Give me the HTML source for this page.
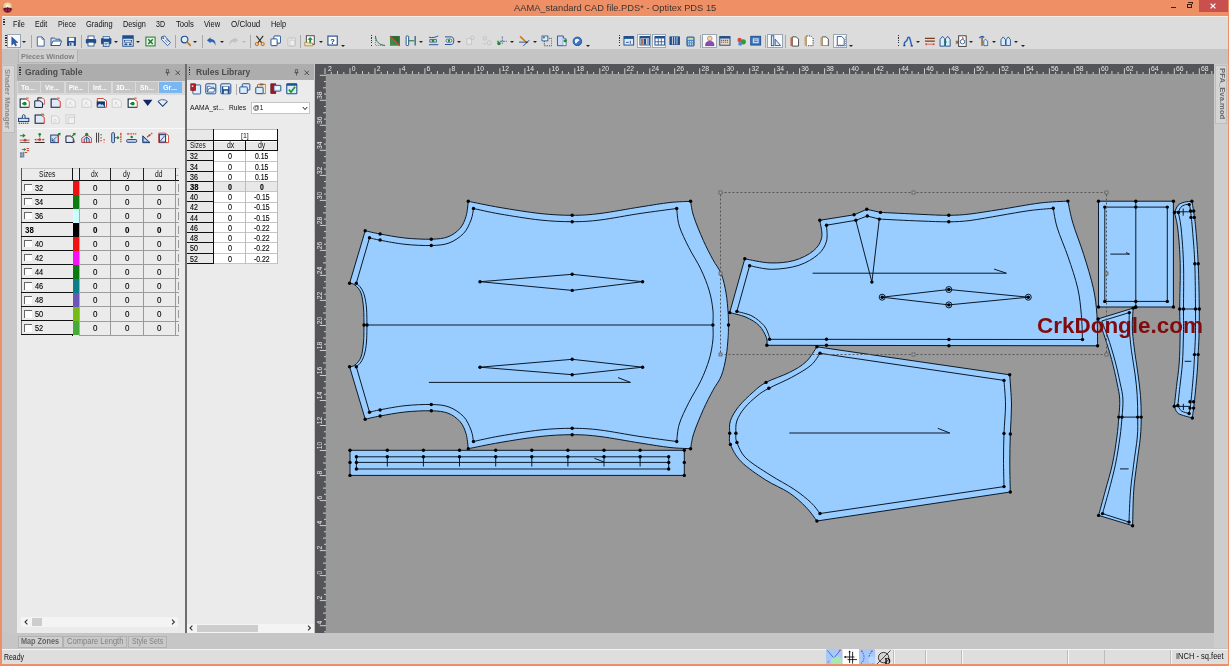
<!DOCTYPE html><html><head><meta charset="utf-8"><title>Optitex PDS 15</title>
<style>html,body{margin:0;padding:0}body{width:1229px;height:666px;overflow:hidden;position:relative;background:#ee8f66;font-family:"Liberation Sans", sans-serif;}#root{position:absolute;left:0;top:0;width:1229px;height:666px;overflow:hidden;will-change:transform}div{box-sizing:border-box}</style></head><body><div id="root">
<div style="position:absolute;left:0px;top:0px;width:1229px;height:16px;background:#ee8f66;"></div>
<div style="position:absolute;left:513.80px;top:1.00px;font-size:9.6px;line-height:13px;color:#3c3430;white-space:nowrap;transform:scaleX(0.970);transform-origin:0 50%;">AAMA_standard CAD file.PDS* - Optitex PDS 15</div>
<svg style="position:absolute;left:2px;top:1.8px" width="11.2" height="11.2" viewBox="0 0 11.2 11.2"><defs><radialGradient id="ag" cx="50%" cy="35%" r="60%"><stop offset="0" stop-color="#fff8e8"/><stop offset="0.55" stop-color="#e8c890"/><stop offset="1" stop-color="#b87828"/></radialGradient></defs><circle cx="5.6" cy="5.6" r="5.4" fill="url(#ag)"/><path d="M1.2,6.6 C2.6,5.2 4.2,6.6 5.6,5 C7,6.6 8.6,5.2 10,6.6 C9.6,9.4 7.6,10.6 5.6,10.6 C3.6,10.6 1.6,9.4 1.2,6.6 Z" fill="#6a1030"/><circle cx="4.2" cy="8.2" r="0.9" fill="#b03060"/><circle cx="7" cy="8.2" r="0.9" fill="#b03060"/></svg>
<div style="position:absolute;left:1199px;top:0px;width:28.5px;height:11.7px;background:#c8504e;"></div>
<div style="position:absolute;left:1170.6px;top:6.8px;width:5.4px;height:1.4px;background:#3a2218;"></div>
<div style="position:absolute;left:1186.5px;top:3.6px;width:5px;height:4.6px;border:1px solid #3a2218"></div><div style="position:absolute;left:1188px;top:2.4px;width:5px;height:2px;border-top:1px solid #3a2218;border-right:1px solid #3a2218"></div>
<svg style="position:absolute;left:1210px;top:3px" width="6" height="6" viewBox="0 0 6 6"><path d="M0.6,0.6 L5.4,5.4 M5.4,0.6 L0.6,5.4" stroke="#fff" stroke-width="1.3"/></svg>
<div style="position:absolute;left:1.6px;top:16px;width:1226.2px;height:648px;background:#c6c6c6;"></div>
<div style="position:absolute;left:1.6px;top:16px;width:1226.2px;height:33.5px;background:#dcdcdc;"></div>
<div style="position:absolute;left:1.6px;top:16px;width:1226.2px;height:0.8px;background:#f8ece6;"></div>
<div style="position:absolute;left:1.6px;top:49.4px;width:1226.2px;height:15px;background:#c4c4c4;"></div>
<div style="position:absolute;left:3.2px;top:18.5px;width:1.4px;height:7px;background:repeating-linear-gradient(#333 0 1.2px,transparent 1.2px 2.4px)"></div>
<div style="position:absolute;left:12.60px;top:19.00px;font-size:8.2px;line-height:11px;color:#111;white-space:nowrap;transform:scaleX(0.893);transform-origin:0 50%;">File</div>
<div style="position:absolute;left:34.90px;top:19.00px;font-size:8.2px;line-height:11px;color:#111;white-space:nowrap;transform:scaleX(0.870);transform-origin:0 50%;">Edit</div>
<div style="position:absolute;left:57.70px;top:19.00px;font-size:8.2px;line-height:11px;color:#111;white-space:nowrap;transform:scaleX(0.878);transform-origin:0 50%;">Piece</div>
<div style="position:absolute;left:85.70px;top:19.00px;font-size:8.2px;line-height:11px;color:#111;white-space:nowrap;transform:scaleX(0.912);transform-origin:0 50%;">Grading</div>
<div style="position:absolute;left:122.80px;top:19.00px;font-size:8.2px;line-height:11px;color:#111;white-space:nowrap;transform:scaleX(0.893);transform-origin:0 50%;">Design</div>
<div style="position:absolute;left:156.30px;top:19.00px;font-size:8.2px;line-height:11px;color:#111;white-space:nowrap;transform:scaleX(0.859);transform-origin:0 50%;">3D</div>
<div style="position:absolute;left:176.00px;top:19.00px;font-size:8.2px;line-height:11px;color:#111;white-space:nowrap;transform:scaleX(0.935);transform-origin:0 50%;">Tools</div>
<div style="position:absolute;left:204.30px;top:19.00px;font-size:8.2px;line-height:11px;color:#111;white-space:nowrap;transform:scaleX(0.913);transform-origin:0 50%;">View</div>
<div style="position:absolute;left:230.60px;top:19.00px;font-size:8.2px;line-height:11px;color:#111;white-space:nowrap;transform:scaleX(0.974);transform-origin:0 50%;">O/Cloud</div>
<div style="position:absolute;left:270.60px;top:19.00px;font-size:8.2px;line-height:11px;color:#111;white-space:nowrap;transform:scaleX(0.895);transform-origin:0 50%;">Help</div>
<div style="position:absolute;left:5.2px;top:35px;width:1.4px;height:12px;background:repeating-linear-gradient(#333 0 1.2px,transparent 1.2px 2.4px)"></div><div style="position:absolute;left:6.5px;top:33.5px;width:14px;height:14px;background:#f8f8f8;border:0.6px solid #9aa6b4;"></div><svg style="position:absolute;left:8.5px;top:35.5px" width="11" height="11" viewBox="0 0 12 12"><path d="M3,1 L3,10 L5.3,7.8 L7,11 L8.3,10.4 L6.8,7.3 L9.8,7.2 Z" fill="#2a5db0" stroke="#16386e" stroke-width="0.5"/></svg><div style="position:absolute;left:22.2px;top:40.5px;width:0;height:0;border-left:2.2px solid transparent;border-right:2.2px solid transparent;border-top:2.6px solid #222"></div><div style="position:absolute;left:30.6px;top:34.5px;width:1px;height:13px;background:#a8a8a8;"></div><svg style="position:absolute;left:35px;top:35.5px" width="11" height="11" viewBox="0 0 12 12"><path d="M2.5,1 H7.5 L10,3.5 V11 H2.5 Z" fill="#fff" stroke="#1f4e8c" stroke-width="0.9"/><path d="M7.5,1 V3.5 H10" fill="none" stroke="#1f4e8c" stroke-width="0.7"/></svg><svg style="position:absolute;left:49.5px;top:35px" width="12" height="12" viewBox="0 0 12 12"><path d="M1,3 H4.5 L5.5,4.2 H10 V10.5 H1 Z" fill="#cfe3f7" stroke="#1f4e8c" stroke-width="0.9"/><path d="M1,10.5 L3,6 H11.6 L10,10.5 Z" fill="#fff" stroke="#1f4e8c" stroke-width="0.9"/></svg><svg style="position:absolute;left:65.5px;top:35.5px" width="11" height="11" viewBox="0 0 12 12"><rect x="1.2" y="1.2" width="9.6" height="9.6" rx="0.8" fill="#1f4e8c"/><rect x="3" y="1.8" width="6" height="3.6" fill="#fff"/><rect x="3.6" y="7.2" width="4.8" height="3.6" fill="#dbe8f8"/><rect x="4.4" y="7.8" width="1.5" height="2.6" fill="#1f4e8c"/></svg><div style="position:absolute;left:81px;top:34.5px;width:1px;height:13px;background:#a8a8a8;"></div><svg style="position:absolute;left:84.5px;top:35px" width="12" height="12" viewBox="0 0 12 12"><rect x="3" y="1" width="6" height="3.4" fill="#fff" stroke="#1f4e8c" stroke-width="0.8"/><rect x="0.8" y="4" width="10.4" height="4.6" rx="1" fill="#1f4e8c"/><rect x="3" y="7.2" width="6" height="3.8" fill="#fff" stroke="#1f4e8c" stroke-width="0.8"/></svg><svg style="position:absolute;left:100px;top:34.8px" width="12.4" height="12.4" viewBox="0 0 12 12"><rect x="1" y="3" width="10" height="6" rx="1" fill="#1f4e8c"/><rect x="3" y="1.5" width="6" height="2.4" fill="#cfe3f7" stroke="#1f4e8c" stroke-width="0.6"/><rect x="3.2" y="6.6" width="5.6" height="4.4" fill="#fff" stroke="#1f4e8c" stroke-width="0.8"/><path d="M4.2,8.3 H7.8 M4.2,9.6 H7" stroke="#1f4e8c" stroke-width="0.6"/></svg><div style="position:absolute;left:113.8px;top:40.5px;width:0;height:0;border-left:2.2px solid transparent;border-right:2.2px solid transparent;border-top:2.6px solid #222"></div><svg style="position:absolute;left:122px;top:35px" width="12" height="12" viewBox="0 0 12 12"><rect x="0.8" y="0.8" width="10.4" height="10.4" fill="#fff" stroke="#1f4e8c" stroke-width="1"/><rect x="0.8" y="0.8" width="10.4" height="3" fill="#1f4e8c"/><rect x="2.4" y="5.2" width="7.2" height="2" fill="none" stroke="#1f4e8c" stroke-width="0.8"/><rect x="2.4" y="8.4" width="3" height="1.8" fill="#1f4e8c"/><rect x="6.8" y="8.4" width="2.8" height="1.8" fill="#1f4e8c"/></svg><div style="position:absolute;left:136.1px;top:40.5px;width:0;height:0;border-left:2.2px solid transparent;border-right:2.2px solid transparent;border-top:2.6px solid #222"></div><svg style="position:absolute;left:145px;top:35.5px" width="11" height="11" viewBox="0 0 12 12"><rect x="1" y="1.2" width="10" height="9.6" fill="#e8f4e8" stroke="#1e7a2e" stroke-width="1.1"/><path d="M3.5,3.5 L8.5,8.7 M8.5,3.5 L3.5,8.7" stroke="#1e7a2e" stroke-width="1.6"/></svg><svg style="position:absolute;left:160px;top:35.3px" width="11.4" height="11.4" viewBox="0 0 12 12"><path d="M1.5,2 L5,1 L11,8 L8,11.2 L1.5,4.8 Z" fill="#eaf2fb" stroke="#1f4e8c" stroke-width="0.9"/><circle cx="3.4" cy="3.2" r="0.9" fill="#1f4e8c"/><path d="M5,5 L8,8.2 M6.6,4 L9.4,7" stroke="#1f4e8c" stroke-width="0.7"/></svg><div style="position:absolute;left:175.4px;top:34.5px;width:1px;height:13px;background:#a8a8a8;"></div><svg style="position:absolute;left:179.6px;top:35.3px" width="11.4" height="11.4" viewBox="0 0 12 12"><circle cx="4.8" cy="4.8" r="3.5" fill="#dcecfb" stroke="#1f4e8c" stroke-width="1.2"/><path d="M7.4,7.4 L11,11" stroke="#c07a2a" stroke-width="1.8" stroke-linecap="round"/></svg><div style="position:absolute;left:193.3px;top:40.5px;width:0;height:0;border-left:2.2px solid transparent;border-right:2.2px solid transparent;border-top:2.6px solid #222"></div><div style="position:absolute;left:202.2px;top:34.5px;width:1px;height:13px;background:#a8a8a8;"></div><svg style="position:absolute;left:206px;top:35.5px" width="11" height="11" viewBox="0 0 12 12"><path d="M1,4.6 L5,1.4 V3.4 C9,3.4 10.8,6 10.4,10.6 C9.6,7.6 8.2,6.2 5,6.2 V8 Z" fill="#2a62b8"/></svg><div style="position:absolute;left:219.5px;top:40.5px;width:0;height:0;border-left:2.2px solid transparent;border-right:2.2px solid transparent;border-top:2.6px solid #222"></div><svg style="position:absolute;left:228px;top:35.5px" width="11" height="11" viewBox="0 0 12 12"><path d="M11,4.6 L7,1.4 V3.4 C3,3.4 1.2,6 1.6,10.6 C2.4,7.6 3.8,6.2 7,6.2 V8 Z" fill="#c2c2c2"/></svg><div style="position:absolute;left:242px;top:40.5px;width:0;height:0;border-left:2.2px solid transparent;border-right:2.2px solid transparent;border-top:2.6px solid #b8b8b8"></div><div style="position:absolute;left:250.2px;top:34.5px;width:1px;height:13px;background:#a8a8a8;"></div><svg style="position:absolute;left:254.3px;top:35.2px" width="11.6" height="11.6" viewBox="0 0 12 12"><path d="M2.5,1 L8.2,8.4 M9.5,1 L3.8,8.4" stroke="#333" stroke-width="1.2"/><circle cx="3" cy="9.4" r="1.6" fill="none" stroke="#d07818" stroke-width="1.2"/><circle cx="9" cy="9.4" r="1.6" fill="none" stroke="#d07818" stroke-width="1.2"/></svg><svg style="position:absolute;left:269.7px;top:35.2px" width="11.6" height="11.6" viewBox="0 0 12 12"><rect x="4" y="1" width="7" height="7.4" rx="0.6" fill="#fff" stroke="#1f4e8c" stroke-width="1"/><rect x="1" y="4" width="6.4" height="7" rx="0.6" fill="#fff" stroke="#1f4e8c" stroke-width="1"/></svg><svg style="position:absolute;left:285.5px;top:35.5px" width="11" height="11" viewBox="0 0 12 12"><rect x="2" y="2" width="8.4" height="9" rx="0.6" fill="#e4e4e4" stroke="#c0c0c0" stroke-width="0.9"/><rect x="4" y="1" width="4.4" height="2" fill="#d0d0d0"/><rect x="4.4" y="4.6" width="5" height="5.6" fill="#efefef" stroke="#c6c6c6" stroke-width="0.7"/></svg><div style="position:absolute;left:300.2px;top:34.5px;width:1px;height:13px;background:#a8a8a8;"></div><svg style="position:absolute;left:303.9px;top:35.2px" width="11.6" height="11.6" viewBox="0 0 12 12"><rect x="2.4" y="0.8" width="8.2" height="8.8" fill="#fff" stroke="#333" stroke-width="0.9"/><path d="M6.4,2 L9.2,5 H7.4 V8 H5.4 V5 H3.6 Z" fill="#1f8a32"/><path d="M0.8,7.6 H4 L4.8,8.4 H9 V11.2 H0.8 Z" fill="#f3e3b0" stroke="#8a6a20" stroke-width="0.6"/></svg><div style="position:absolute;left:318.5px;top:40.5px;width:0;height:0;border-left:2.2px solid transparent;border-right:2.2px solid transparent;border-top:2.6px solid #222"></div><svg style="position:absolute;left:327.2px;top:35.4px" width="11.2" height="11.2" viewBox="0 0 12 12"><rect x="1" y="1.2" width="10" height="9.6" fill="#fff" stroke="#1f4e8c" stroke-width="1.2"/><text x="6" y="9.2" font-family="Liberation Sans, sans-serif" font-weight="bold" font-size="8" text-anchor="middle" fill="#1b2f55">?</text></svg><div style="position:absolute;left:341.3px;top:44.5px;width:0;height:0;border-left:2.2px solid transparent;border-right:2.2px solid transparent;border-top:2.6px solid #222"></div><div style="position:absolute;left:370.8px;top:35px;width:1.4px;height:12px;background:repeating-linear-gradient(#333 0 1.2px,transparent 1.2px 2.4px)"></div><svg style="position:absolute;left:373.7px;top:35.1px" width="11.8" height="11.8" viewBox="0 0 12 12"><path d="M1.5,1 C2,7 5,10 11.2,10.6" fill="none" stroke="#2f7a5a" stroke-width="1"/><path d="M1.5,1 V10.6 H11.2" fill="none" stroke="#445" stroke-width="0.6" stroke-dasharray="1,1"/></svg><svg style="position:absolute;left:389.3px;top:35.15px" width="11.7" height="11.7" viewBox="0 0 12 12"><rect x="1" y="1" width="10" height="10" fill="#3c8a48"/><path d="M1,1 L11,11 V1 Z" fill="#2c6a38"/><path d="M1,1 L11,11" stroke="#c4502a" stroke-width="1.2"/></svg><svg style="position:absolute;left:405.3px;top:35.25px" width="11.5" height="11.5" viewBox="0 0 12 12"><rect x="1.2" y="1" width="2.6" height="10" rx="0.8" fill="#fff" stroke="#1f4e8c" stroke-width="1"/><path d="M4,6 H9.6" stroke="#1f8a32" stroke-width="1.2"/><path d="M10.6,1 V11" stroke="#1f4e8c" stroke-width="1.2"/></svg><div style="position:absolute;left:419.3px;top:40.5px;width:0;height:0;border-left:2.2px solid transparent;border-right:2.2px solid transparent;border-top:2.6px solid #222"></div><svg style="position:absolute;left:428.2px;top:35.4px" width="11.2" height="11.2" viewBox="0 0 12 12"><path d="M1,2.4 C5,3.4 8,2.4 11,1 M1,10.4 H11" fill="none" stroke="#1f4e8c" stroke-width="1"/><rect x="2" y="5" width="7" height="2.6" fill="none" stroke="#1f4e8c" stroke-width="0.8"/><circle cx="5.4" cy="6.3" r="1.4" fill="#1f8a32"/></svg><svg style="position:absolute;left:444px;top:35.3px" width="11.4" height="11.4" viewBox="0 0 12 12"><path d="M1,2 H8 C11,2 11,10 8,10 H1" fill="none" stroke="#1f4e8c" stroke-width="1"/><rect x="2.2" y="4.4" width="6" height="3.2" rx="1.4" fill="#fff" stroke="#1f4e8c" stroke-width="0.8"/><circle cx="5.2" cy="6" r="1.3" fill="#1f8a32"/></svg><div style="position:absolute;left:457.4px;top:40.5px;width:0;height:0;border-left:2.2px solid transparent;border-right:2.2px solid transparent;border-top:2.6px solid #222"></div><svg style="position:absolute;left:465.3px;top:35.4px" width="11.2" height="11.2" viewBox="0 0 12 12"><path d="M2,4 H7 V10 H2 Z" fill="#e6e6e6" stroke="#c2c2c2" stroke-width="0.9"/><circle cx="8" cy="3" r="2" fill="none" stroke="#c2c2c2" stroke-width="0.9"/></svg><svg style="position:absolute;left:481px;top:35.1px" width="11.8" height="11.8" viewBox="0 0 12 12"><circle cx="4" cy="3.4" r="1.8" fill="none" stroke="#c2c2c2" stroke-width="0.9"/><circle cx="8.4" cy="8" r="2.2" fill="none" stroke="#c2c2c2" stroke-width="0.9"/><path d="M2,9 H5" stroke="#c2c2c2"/></svg><svg style="position:absolute;left:495.7px;top:35.1px" width="11.8" height="11.8" viewBox="0 0 12 12"><path d="M1,6.4 H11 M6.4,1.6 V9" stroke="#1f4e8c" stroke-width="0.8" stroke-dasharray="2,1"/><circle cx="3" cy="8.6" r="1.8" fill="#1f8a32"/></svg><div style="position:absolute;left:510.1px;top:40.5px;width:0;height:0;border-left:2.2px solid transparent;border-right:2.2px solid transparent;border-top:2.6px solid #222"></div><svg style="position:absolute;left:517.8px;top:34.9px" width="12.2" height="12.2" viewBox="0 0 12 12"><path d="M1,7 H10 M5,11 L11,5" stroke="#1f4e8c" stroke-width="0.9"/><path d="M2,1.4 L7.4,6.4" stroke="#d07818" stroke-width="1.6"/><path d="M7.4,6.4 L9,8" stroke="#333" stroke-width="1"/></svg><div style="position:absolute;left:532.6px;top:40.5px;width:0;height:0;border-left:2.2px solid transparent;border-right:2.2px solid transparent;border-top:2.6px solid #222"></div><svg style="position:absolute;left:540.7px;top:35.1px" width="11.8" height="11.8" viewBox="0 0 12 12"><rect x="3.4" y="3.4" width="7.6" height="7.6" fill="none" stroke="#333" stroke-width="0.8" stroke-dasharray="1.4,1"/><rect x="1" y="1" width="6" height="5" fill="#dcecfb" stroke="#1f4e8c" stroke-width="0.8"/><circle cx="3" cy="2.6" r="1" fill="#1f8a32"/></svg><svg style="position:absolute;left:556.3px;top:35.15px" width="11.7" height="11.7" viewBox="0 0 12 12"><path d="M1.5,1 H7.5 V11 H1.5 Z" fill="#cfdcf8" stroke="#1f4e8c" stroke-width="0.9"/><path d="M7.5,3 L10.4,4 V11 H7.5" fill="#fff" stroke="#1f4e8c" stroke-width="0.8"/><circle cx="9.4" cy="6" r="1.6" fill="#1f8a32"/></svg><svg style="position:absolute;left:572.4px;top:35.6px" width="10.8" height="10.8" viewBox="0 0 12 12"><circle cx="6" cy="6" r="4.8" fill="#3a76c8" stroke="#1b3f7a" stroke-width="0.8"/><path d="M3.5,4 C5,2.5 7,3 8.5,4.6 C7,6 5.6,6.6 4.4,8.6 C3,7.4 2.8,5.4 3.5,4 Z" fill="#eaf4ff"/></svg><div style="position:absolute;left:586.3px;top:44.5px;width:0;height:0;border-left:2.2px solid transparent;border-right:2.2px solid transparent;border-top:2.6px solid #222"></div><div style="position:absolute;left:619px;top:35px;width:1.4px;height:12px;background:repeating-linear-gradient(#333 0 1.2px,transparent 1.2px 2.4px)"></div><svg style="position:absolute;left:623px;top:35.2px" width="11.6" height="11.6" viewBox="0 0 12 12"><rect x="1" y="1.6" width="10" height="8.8" fill="#dcecfb" stroke="#1f4e8c" stroke-width="1"/><rect x="1" y="1.6" width="10" height="2.4" fill="#1f4e8c"/><path d="M3,7.6 H6 M7.6,6 V9" stroke="#1f4e8c" stroke-width="0.9"/></svg><div style="position:absolute;left:636.5px;top:33.5px;width:14.5px;height:14px;background:#f8f8f8;border:0.6px solid #9aa6b4;"></div><svg style="position:absolute;left:638.5px;top:35.25px" width="11.5" height="11.5" viewBox="0 0 12 12"><rect x="1" y="1.6" width="10" height="8.8" fill="#fff" stroke="#1f4e8c" stroke-width="1"/><rect x="1" y="1.6" width="10" height="2" fill="#1f4e8c"/><rect x="2" y="4" width="2.6" height="6" fill="#b86a4a"/><rect x="5" y="4" width="2.4" height="6" fill="#1f4e8c"/><rect x="8" y="4" width="2.4" height="6" fill="#8aa8d8"/></svg><div style="position:absolute;left:652px;top:33.5px;width:14px;height:14px;background:#f8f8f8;border:0.6px solid #9aa6b4;"></div><svg style="position:absolute;left:653.7px;top:35.2px" width="11.6" height="11.6" viewBox="0 0 12 12"><rect x="1" y="1.6" width="10" height="8.8" fill="#fff" stroke="#1f4e8c" stroke-width="1"/><rect x="1" y="1.6" width="10" height="2" fill="#1f4e8c"/><path d="M4.4,3.6 V10.4 M7.6,3.6 V10.4 M1,7 H11" stroke="#1f4e8c" stroke-width="0.8"/></svg><svg style="position:absolute;left:669px;top:35.3px" width="11.4" height="11.4" viewBox="0 0 12 12"><rect x="1" y="2" width="10" height="8" fill="#1f4e8c" stroke="#1f4e8c" stroke-width="1"/><path d="M3.6,2 V10 M6,2 V10 M8.4,2 V10" stroke="#fff" stroke-width="0.8"/></svg><svg style="position:absolute;left:685px;top:35.5px" width="11" height="11" viewBox="0 0 12 12"><rect x="2" y="1" width="8" height="10" rx="0.8" fill="#4a86c8" stroke="#1f4e8c" stroke-width="0.8"/><rect x="3" y="2" width="6" height="2.2" fill="#bfe0b0"/><path d="M3.4,6 H8.6 M3.4,7.8 H8.6 M3.4,9.6 H8.6" stroke="#e8f0ff" stroke-width="1" stroke-dasharray="1.2,0.8"/></svg><div style="position:absolute;left:700px;top:34.5px;width:1px;height:13px;background:#a8a8a8;"></div><div style="position:absolute;left:702px;top:33.5px;width:14.5px;height:14px;background:#f8f8f8;border:0.6px solid #9aa6b4;"></div><svg style="position:absolute;left:704px;top:35.2px" width="11.6" height="11.6" viewBox="0 0 12 12"><circle cx="6" cy="3.6" r="2.4" fill="#f2d2b0" stroke="#9a6a40" stroke-width="0.6"/><path d="M1.6,11 C1.6,7 4,6.4 6,6.4 C8,6.4 10.4,7 10.4,11 Z" fill="#8a4ab8" stroke="#5a2a88" stroke-width="0.6"/></svg><svg style="position:absolute;left:719.2px;top:35.1px" width="11.8" height="11.8" viewBox="0 0 12 12"><rect x="0.8" y="1.6" width="10.4" height="8.8" fill="#e8d8c8" stroke="#1f4e8c" stroke-width="1"/><rect x="0.8" y="1.6" width="10.4" height="2" fill="#1f4e8c"/><path d="M2,5.4 H10 M2,7.4 H10" stroke="#8a5a3a" stroke-width="1.2" stroke-dasharray="1.2,0.8"/></svg><svg style="position:absolute;left:735.6px;top:35.5px" width="11" height="11" viewBox="0 0 12 12"><circle cx="4" cy="4.4" r="2.4" fill="#d84a3a"/><circle cx="8" cy="6.4" r="2.8" fill="#2f9a3a"/><circle cx="4.6" cy="8.4" r="2.2" fill="#4a8ad8"/></svg><svg style="position:absolute;left:750.2px;top:35.3px" width="11.4" height="11.4" viewBox="0 0 12 12"><rect x="0.8" y="1.4" width="10.4" height="9.2" fill="#3a76c8" stroke="#1f4e8c" stroke-width="1"/><rect x="3" y="3.6" width="6" height="5" fill="#dcecfb"/><path d="M4,5.2 H8 M4,7 H8" stroke="#1f4e8c" stroke-width="0.8"/></svg><div style="position:absolute;left:764.6px;top:34.5px;width:1px;height:13px;background:#a8a8a8;"></div><div style="position:absolute;left:767px;top:33.5px;width:15.5px;height:14px;background:#f8f8f8;border:0.6px solid #9aa6b4;"></div><svg style="position:absolute;left:769.5px;top:35.25px" width="11.5" height="11.5" viewBox="0 0 12 12"><rect x="1.4" y="0.8" width="2.6" height="10.4" fill="#dcecfb" stroke="#1f4e8c" stroke-width="0.9"/><path d="M5.4,11 H11 L5.4,4.4 Z" fill="#dcecfb" stroke="#1f4e8c" stroke-width="0.9"/></svg><div style="position:absolute;left:785.2px;top:34.5px;width:1px;height:13px;background:#a8a8a8;"></div><svg style="position:absolute;left:788.6px;top:35.5px" width="11" height="11" viewBox="0 0 12 12"><path d="M3.6,1 H8 L10.4,3.4 V11 H3.6 Z" fill="#fff" stroke="#333" stroke-width="0.9" /><rect x="1.6" y="1.4" width="2.4" height="9.6" fill="#b86a4a"/></svg><svg style="position:absolute;left:803px;top:35.2px" width="11.6" height="11.6" viewBox="0 0 12 12"><path d="M3.6,1 H8 L10.4,3.4 V11 H3.6 Z" fill="#fff" stroke="#333" stroke-width="0.9" stroke-dasharray="1.4,1"/><rect x="1.6" y="1.4" width="2.4" height="9.6" fill="#c8a070"/></svg><svg style="position:absolute;left:818.6px;top:35.6px" width="10.8" height="10.8" viewBox="0 0 12 12"><path d="M3.6,1 H8 L10.4,3.4 V11 H3.6 Z" fill="#fff" stroke="#333" stroke-width="0.9" /><rect x="1.6" y="1.4" width="2.4" height="9.6" fill="#c8a070"/></svg><div style="position:absolute;left:832.5px;top:33.5px;width:14.5px;height:14px;background:#f8f8f8;border:0.6px solid #9aa6b4;"></div><svg style="position:absolute;left:834.5px;top:35.25px" width="11.5" height="11.5" viewBox="0 0 12 12"><path d="M2.4,1.6 H7 L9.6,4.2 V10.8 H2.4 Z" fill="#fff" stroke="#1f4e8c" stroke-width="0.9"/><path d="M1,11.4 H11 V1" fill="none" stroke="#1f4e8c" stroke-width="0.7" stroke-dasharray="1,1"/></svg><div style="position:absolute;left:849.3px;top:44.5px;width:0;height:0;border-left:2.2px solid transparent;border-right:2.2px solid transparent;border-top:2.6px solid #222"></div><div style="position:absolute;left:898px;top:35px;width:1.4px;height:12px;background:repeating-linear-gradient(#333 0 1.2px,transparent 1.2px 2.4px)"></div><svg style="position:absolute;left:901.5px;top:35.1px" width="11.8" height="11.8" viewBox="0 0 12 12"><path d="M2.4,10.4 V8.4 C2.4,6.4 5,7 5.4,4.4 C5.6,2 7.4,1.6 8,3.4 L9.8,10.6" fill="none" stroke="#2a62b8" stroke-width="1.5"/><path d="M1.4,10.8 H3.4 M8.8,11 H11" stroke="#16386e" stroke-width="1.2"/></svg><div style="position:absolute;left:915.8px;top:40.5px;width:0;height:0;border-left:2.2px solid transparent;border-right:2.2px solid transparent;border-top:2.6px solid #222"></div><svg style="position:absolute;left:923.6px;top:35.1px" width="11.8" height="11.8" viewBox="0 0 12 12"><path d="M1,3.4 H11 M1,6.2 H11" stroke="#7a3a1a" stroke-width="1.2"/><path d="M1.4,9.4 H10.6 M1.4,9.4 L3,8.4 M1.4,9.4 L3,10.4 M10.6,9.4 L9,8.4 M10.6,9.4 L9,10.4" stroke="#d83a2a" stroke-width="0.7" fill="none"/></svg><svg style="position:absolute;left:939.2px;top:34.9px" width="12.2" height="12.2" viewBox="0 0 12 12"><path d="M1,11 V4.4 L3.4,1.4 L5.6,3.6 V11 Z" fill="#dcecfb" stroke="#1f4e8c" stroke-width="0.9"/><path d="M6.4,11 V3.6 L8.8,1.4 L11,4.4 V11 Z" fill="#dcecfb" stroke="#1f4e8c" stroke-width="0.9"/><path d="M5,7 H8 M5,7 L6,6.2 M5,7 L6,7.8" stroke="#1f8a32" stroke-width="0.8" fill="none"/></svg><svg style="position:absolute;left:954.5px;top:34.9px" width="12.2" height="12.2" viewBox="0 0 12 12"><rect x="3.6" y="0.8" width="7.4" height="10.4" fill="#fff" stroke="#333" stroke-width="0.9"/><circle cx="7.4" cy="6.6" r="2.2" fill="none" stroke="#1f4e8c" stroke-width="0.8"/><path d="M7,2.4 L8.4,3.8" stroke="#d83a2a" stroke-width="1.2"/><path d="M0.8,6 L3.2,8.4 M3.2,6 L0.8,8.4 M2,5.4 V9" stroke="#7a4a1a" stroke-width="0.8"/></svg><div style="position:absolute;left:969.3px;top:40.5px;width:0;height:0;border-left:2.2px solid transparent;border-right:2.2px solid transparent;border-top:2.6px solid #222"></div><svg style="position:absolute;left:978px;top:35.2px" width="11.6" height="11.6" viewBox="0 0 12 12"><path d="M1.4,3 C3,1.4 5,1.4 6.4,2.6" fill="none" stroke="#2a62b8" stroke-width="1.4"/><path d="M4.2,2.4 V11" stroke="#7a4a1a" stroke-width="1.3"/><path d="M6,11 V6 L7.6,4.4 L10,6.4 V11 Z" fill="#dcecfb" stroke="#1f4e8c" stroke-width="0.8"/></svg><div style="position:absolute;left:991.5px;top:40.5px;width:0;height:0;border-left:2.2px solid transparent;border-right:2.2px solid transparent;border-top:2.6px solid #222"></div><svg style="position:absolute;left:999.6px;top:35.3px" width="11.4" height="11.4" viewBox="0 0 12 12"><path d="M1,11 V5 L3.4,2 L5.8,5 V11 Z M6.4,11 V5 L8.8,2 L11,5 V11 Z" fill="#dcecfb" stroke="#1f4e8c" stroke-width="0.9"/></svg><div style="position:absolute;left:1013.8px;top:40.5px;width:0;height:0;border-left:2.2px solid transparent;border-right:2.2px solid transparent;border-top:2.6px solid #222"></div><div style="position:absolute;left:1021.4px;top:44.5px;width:0;height:0;border-left:2.2px solid transparent;border-right:2.2px solid transparent;border-top:2.6px solid #222"></div>
<div style="position:absolute;left:17.5px;top:49.5px;width:60px;height:13px;background:#cecece;border:0.6px solid #b4b4b4;border-top:none;"></div>
<div style="position:absolute;left:20.90px;top:51.00px;font-size:7.4px;line-height:11px;color:#808080;white-space:nowrap;font-weight:bold;transform:scaleX(0.991);transform-origin:0 50%;">Pieces Window</div>
<div style="position:absolute;left:1.6px;top:64px;width:15.4px;height:584px;background:#c8c8c8;"></div>
<div style="position:absolute;left:3px;top:65px;width:11.5px;height:67.5px;background:#d6d6d6;border:0.6px solid #bdbdbd;border-left:none;"></div>
<div style="position:absolute;left:1.8px;top:69.4px;width:10px;height:64px;writing-mode:vertical-rl;font-size:7.7px;line-height:10px;color:#8c8c8c;font-weight:bold;white-space:nowrap">Shader Manager</div>
<div style="position:absolute;left:17px;top:64px;width:168.5px;height:569.6px;background:#ebebeb;"></div>
<div style="position:absolute;left:17px;top:64.4px;width:168.5px;height:17px;background:#adadad;"></div>
<div style="position:absolute;left:19.2px;top:67px;width:1.4px;height:10px;background:repeating-linear-gradient(#333 0 1.2px,transparent 1.2px 2.4px)"></div>
<div style="position:absolute;left:24.60px;top:67.00px;font-size:8.2px;line-height:11px;color:#4c4c4c;white-space:nowrap;font-weight:bold;transform:scaleX(1.056);transform-origin:0 50%;">Grading Table</div>
<svg style="position:absolute;left:165px;top:69px" width="5" height="7" viewBox="0 0 5 7"><path d="M1.4,0.6 H3.6 V3.6 H1.4 Z M0.4,3.8 H4.6 M2.5,3.8 V6.6" fill="none" stroke="#444" stroke-width="0.7"/></svg><svg style="position:absolute;left:174.8px;top:69.6px" width="5.6" height="5.6" viewBox="0 0 5.6 5.6"><path d="M0.5,0.5 L5.1,5.1 M5.1,0.5 L0.5,5.1" stroke="#444" stroke-width="0.9"/></svg>
<div style="position:absolute;left:17px;top:81px;width:168.5px;height:13.5px;background:#d9d9d9;"></div>
<div style="position:absolute;left:17.9px;top:82.2px;width:22.1px;height:11.2px;background:#c6c6c6;"></div>
<div style="position:absolute;left:21.40px;top:82.00px;font-size:8px;line-height:11px;color:#fff;white-space:nowrap;font-weight:bold;transform:scaleX(0.883);transform-origin:0 50%;">To...</div>
<div style="position:absolute;left:41.4px;top:82.2px;width:22.6px;height:11.2px;background:#c6c6c6;"></div>
<div style="position:absolute;left:44.90px;top:82.00px;font-size:8px;line-height:11px;color:#fff;white-space:nowrap;font-weight:bold;transform:scaleX(0.755);transform-origin:0 50%;">Vie...</div>
<div style="position:absolute;left:65.6px;top:82.2px;width:22.3px;height:11.2px;background:#c6c6c6;"></div>
<div style="position:absolute;left:69.10px;top:82.00px;font-size:8px;line-height:11px;color:#fff;white-space:nowrap;font-weight:bold;transform:scaleX(0.750);transform-origin:0 50%;">Pie...</div>
<div style="position:absolute;left:89.3px;top:82.2px;width:21.5px;height:11.2px;background:#c6c6c6;"></div>
<div style="position:absolute;left:92.80px;top:82.00px;font-size:8px;line-height:11px;color:#fff;white-space:nowrap;font-weight:bold;transform:scaleX(0.852);transform-origin:0 50%;">Int...</div>
<div style="position:absolute;left:112.5px;top:82.2px;width:22px;height:11.2px;background:#c6c6c6;"></div>
<div style="position:absolute;left:116.00px;top:82.00px;font-size:8px;line-height:11px;color:#fff;white-space:nowrap;font-weight:bold;transform:scaleX(0.829);transform-origin:0 50%;">3D...</div>
<div style="position:absolute;left:136.2px;top:82.2px;width:21.5px;height:11.2px;background:#c6c6c6;"></div>
<div style="position:absolute;left:139.70px;top:82.00px;font-size:8px;line-height:11px;color:#fff;white-space:nowrap;font-weight:bold;transform:scaleX(0.829);transform-origin:0 50%;">Sh...</div>
<div style="position:absolute;left:159.3px;top:82.2px;width:23.2px;height:11.2px;background:#79b6f2;"></div>
<div style="position:absolute;left:162.80px;top:82.00px;font-size:8px;line-height:11px;color:#fff;white-space:nowrap;font-weight:bold;transform:scaleX(0.900);transform-origin:0 50%;">Gr...</div>
<svg style="position:absolute;left:19px;top:97px" width="11.4" height="11.4" viewBox="0 0 12 12"><path d="M1.2,2.2 H7.2 L10.8,4.6 V10.8 H1.2 Z" fill="#fff"/><path d="M7.2,2.2 H1.2 V10.8 H10.8" fill="none" stroke="#0c1a36" stroke-width="1.1"/><path d="M7.2,2.2 L10.8,4.6 V10.8 M7.4,1.2 H10.2" fill="none" stroke="#d23a2a" stroke-width="1"/><circle cx="6.2" cy="7" r="1.9" fill="#138a2e"/><path d="M2.8,7 L5,5.2 V8.8 Z" fill="#138a2e"/></svg><svg style="position:absolute;left:34px;top:97px" width="11.4" height="11.4" viewBox="0 0 12 12"><path d="M4,0.8 H8.4 L11.2,2.8 V7.6 H4 Z" fill="#e6eefa" stroke="#d23a2a" stroke-width="0.8"/><path d="M0.8,4 H6.2 L9,6 V11 H0.8 Z" fill="#dfe9f8" stroke="#0c1a36" stroke-width="1"/><path d="M4,3.2 V1 H8" fill="none" stroke="#0c1a36" stroke-width="0.8"/></svg><svg style="position:absolute;left:50px;top:97px" width="11.4" height="11.4" viewBox="0 0 12 12"><path d="M1.2,2.2 H7.2 L10.8,4.6 V10.8 H1.2 Z" fill="#dfe9f8"/><path d="M7.2,2.2 H1.2 V10.8 H10.8" fill="none" stroke="#0c1a36" stroke-width="1.1"/><path d="M7.2,2.2 L10.8,4.6 V10.8 M7.4,1.2 H10.2" fill="none" stroke="#d23a2a" stroke-width="1"/></svg><svg style="position:absolute;left:65px;top:97px" width="11.4" height="11.4" viewBox="0 0 12 12"><path d="M1.2,2.2 H7.2 L10.8,4.6 V10.8 H1.2 Z" fill="#f3f3f3" stroke="#c9c9c9" stroke-width="0.9"/><path d="M3.4,9 L6.6,4.6 M4,5 L8,9.2" stroke="#d2d2d2" stroke-width="0.8"/></svg><svg style="position:absolute;left:81px;top:97px" width="11.4" height="11.4" viewBox="0 0 12 12"><path d="M1.2,2.2 H7.2 L10.8,4.6 V10.8 H1.2 Z" fill="#f3f3f3" stroke="#c9c9c9" stroke-width="0.9"/><path d="M3.4,9 L6.6,4.6 M4,5 L8,9.2" stroke="#d2d2d2" stroke-width="0.8"/></svg><svg style="position:absolute;left:95.8px;top:97px" width="11.4" height="11.4" viewBox="0 0 12 12"><path d="M1.4,1.6 H7.4 L11,4 V10.8 H1.4 Z" fill="#fff" stroke="#d23a2a" stroke-width="1"/><rect x="0.8" y="4.6" width="8.6" height="6.4" fill="#16386e"/><path d="M1.4,10.4 C3,6.4 4.4,6.4 5.4,8.6 C6.4,7 7.6,7.4 8.8,10.4 Z" fill="#bfe0ff"/></svg><svg style="position:absolute;left:111.4px;top:97px" width="11.4" height="11.4" viewBox="0 0 12 12"><path d="M1.2,2.2 H7.2 L10.8,4.6 V10.8 H1.2 Z" fill="#f3f3f3" stroke="#c9c9c9" stroke-width="0.9"/><path d="M3.4,9 L6.6,4.6 M4,5 L8,9.2" stroke="#d2d2d2" stroke-width="0.8"/></svg><svg style="position:absolute;left:126.8px;top:97px" width="11.4" height="11.4" viewBox="0 0 12 12"><path d="M1.2,2.2 H7.2 L10.8,4.6 V10.8 H1.2 Z" fill="#fff"/><path d="M7.2,2.2 H1.2 V10.8 H10.8" fill="none" stroke="#0c1a36" stroke-width="1.1"/><path d="M7.2,2.2 L10.8,4.6 V10.8 M7.4,1.2 H10.2" fill="none" stroke="#d23a2a" stroke-width="1"/><circle cx="6.2" cy="7" r="1.9" fill="#138a2e"/><path d="M2.8,7 L5,5.2 V8.8 Z" fill="#138a2e"/></svg><svg style="position:absolute;left:142px;top:97px" width="11.4" height="11.4" viewBox="0 0 12 12"><path d="M1,3 H11 L6,9.6 Z" fill="#0f2668"/></svg><svg style="position:absolute;left:157px;top:97px" width="11.4" height="11.4" viewBox="0 0 12 12"><path d="M1,4.6 L6,9.8 L11,4.6" fill="none" stroke="#16386e" stroke-width="1.1"/><path d="M1,4.6 C4,2.2 8,2.2 11,4.6" fill="none" stroke="#2a62b8" stroke-width="1"/></svg><svg style="position:absolute;left:18.4px;top:112.6px" width="11.4" height="11.4" viewBox="0 0 12 12"><rect x="0.6" y="5.6" width="10.8" height="3.4" fill="#cfe0f6" stroke="#16386e" stroke-width="1"/><path d="M4.6,5.4 V3.4 C4.6,1.2 7.4,1.2 7.4,3.4 V5.4" fill="#cfe0f6" stroke="#16386e" stroke-width="1"/><path d="M0.8,10.8 H11.2" stroke="#16386e" stroke-width="1" stroke-dasharray="1.4,0.8"/></svg><svg style="position:absolute;left:34px;top:112.6px" width="11.4" height="11.4" viewBox="0 0 12 12"><path d="M1.2,2.2 H7.2 L10.8,4.6 V10.8 H1.2 Z" fill="#dfe9f8"/><path d="M7.2,2.2 H1.2 V10.8 H10.8" fill="none" stroke="#0c1a36" stroke-width="1.1"/><path d="M7.2,2.2 L10.8,4.6 V10.8 M7.4,1.2 H10.2" fill="none" stroke="#d23a2a" stroke-width="1"/><text x="6.6" y="3.6" font-family="Liberation Sans, sans-serif" font-size="4.6" fill="#138a2e">oc</text></svg><svg style="position:absolute;left:50px;top:112.6px" width="11.4" height="11.4" viewBox="0 0 12 12"><path d="M1.6,3 H6.6 L9.6,5 V10.8 H1.6 Z" fill="#f3f3f3" stroke="#c9c9c9" stroke-width="0.9"/><circle cx="5.4" cy="7.8" r="1.3" fill="none" stroke="#d0d0d0" stroke-width="0.8"/></svg><svg style="position:absolute;left:65px;top:112.6px" width="11.4" height="11.4" viewBox="0 0 12 12"><rect x="1" y="2" width="9" height="9" fill="#f0f0f0" stroke="#c9c9c9" stroke-width="0.9"/><path d="M3.4,11 V4.4 H10" fill="none" stroke="#c9c9c9" stroke-width="0.9"/></svg><div style="position:absolute;left:17px;top:127.6px;width:168px;height:0.8px;background:#d2d2d2;"></div><div style="position:absolute;left:17px;top:128.4px;width:168px;height:0.8px;background:#f8f8f8;"></div><svg style="position:absolute;left:19px;top:132.4px" width="11.4" height="11.4" viewBox="0 0 12 12"><path d="M0.8,8.6 H11.2" stroke="#d23a2a" stroke-width="0.9"/><circle cx="6.4" cy="8.6" r="1.5" fill="#d23a2a"/><path d="M0.8,11 H11.2" stroke="#333" stroke-width="0.8"/><path d="M1,3.4 H4 V1.6 L7,3.8 L4,6 V4.4 H1 Z" fill="#138a2e"/></svg><svg style="position:absolute;left:34.4px;top:132.4px" width="11.4" height="11.4" viewBox="0 0 12 12"><path d="M0.8,8 H11.2" stroke="#d23a2a" stroke-width="1.2" stroke-dasharray="1.6,1"/><path d="M0.8,8 L2.4,6.8 V9.2 Z M11.2,8 L9.6,6.8 V9.2 Z" fill="#d23a2a"/><circle cx="6" cy="8" r="1.5" fill="#d23a2a"/><path d="M0.8,11 H11.2" stroke="#111" stroke-width="1"/><circle cx="6" cy="2.4" r="1.4" fill="#138a2e"/><path d="M6,3 V5.6" stroke="#138a2e" stroke-width="1"/></svg><svg style="position:absolute;left:50px;top:132.4px" width="11.4" height="11.4" viewBox="0 0 12 12"><rect x="0.8" y="3.2" width="8" height="8" fill="#cfe0f6" stroke="#16386e" stroke-width="1"/><path d="M2.4,9.6 L6.6,5.4 M2.4,6.6 V9.6 H5.6" stroke="#16386e" stroke-width="0.8" fill="none"/><path d="M8.8,3.2 V11.2" stroke="#d23a2a" stroke-width="0.9"/><path d="M7.4,4.6 L10.4,1.6" stroke="#138a2e" stroke-width="1.3"/><path d="M11.2,0.8 L8,1.2 L10.8,4 Z" fill="#138a2e"/></svg><svg style="position:absolute;left:65px;top:132.4px" width="11.4" height="11.4" viewBox="0 0 12 12"><path d="M1,4.2 H5.6 L8.8,6.4 V11 H1 Z" fill="#e6eefa" stroke="#0c1a36" stroke-width="1"/><path d="M5.6,4.2 L8.8,6.4 V11" fill="none" stroke="#d23a2a" stroke-width="0.9"/><path d="M9.6,8 V11 M9,10 L9.6,11 L10.2,10" stroke="#333" stroke-width="0.6" fill="none"/><path d="M7.4,4.6 L10.4,1.6" stroke="#138a2e" stroke-width="1.3"/><path d="M11.2,0.8 L8,1.2 L10.8,4 Z" fill="#138a2e"/></svg><svg style="position:absolute;left:80.6px;top:132.4px" width="11.4" height="11.4" viewBox="0 0 12 12"><path d="M0.8,11 V6.6 L6,2.8 L11.2,6.6 V11 Z" fill="#dfe9f8" stroke="#d23a2a" stroke-width="1"/><path d="M6,11 V5 M3.4,11 V7.4 L6,5.4 L8.6,7.4 V11" fill="none" stroke="#16386e" stroke-width="0.9"/><circle cx="6" cy="2.6" r="1.7" fill="#138a2e"/></svg><svg style="position:absolute;left:95.4px;top:132.4px" width="11.4" height="11.4" viewBox="0 0 12 12"><path d="M1.6,0.8 V11.2 M3.8,0.8 V11.2" stroke="#222" stroke-width="0.9"/><circle cx="6.4" cy="3" r="0.8" fill="#138a2e"/><path d="M6.4,5.4 V11" stroke="#d23a2a" stroke-width="1.4" stroke-dasharray="1.4,1.6"/><path d="M9.6,7.6 V11" stroke="#d23a2a" stroke-width="1.4" stroke-dasharray="1.4,1.6"/></svg><svg style="position:absolute;left:111px;top:132.4px" width="11.4" height="11.4" viewBox="0 0 12 12"><rect x="0.8" y="0.8" width="2.8" height="10.4" rx="0.8" fill="#cfe0f6" stroke="#16386e" stroke-width="1"/><path d="M4,6 H8 M8.6,6 L7,4.8 V7.2 Z" stroke="#138a2e" stroke-width="1" fill="#138a2e"/><path d="M10.4,2 V10" stroke="#d23a2a" stroke-width="1.4" stroke-dasharray="1.6,1"/><path d="M10.4,0.6 L9.4,2.2 H11.4 Z M10.4,11.4 L9.4,9.8 H11.4 Z" fill="#d23a2a"/></svg><svg style="position:absolute;left:126.2px;top:132.4px" width="11.4" height="11.4" viewBox="0 0 12 12"><rect x="0.8" y="8" width="10.4" height="2.8" rx="0.8" fill="#cfe0f6" stroke="#16386e" stroke-width="1"/><circle cx="6" cy="5.2" r="1.3" fill="#138a2e"/><path d="M2,2 H10" stroke="#d23a2a" stroke-width="1.4" stroke-dasharray="1.6,1"/><path d="M0.6,2 L2.2,1 V3 Z M11.4,2 L9.8,1 V3 Z" fill="#d23a2a"/></svg><svg style="position:absolute;left:142px;top:132.4px" width="11.4" height="11.4" viewBox="0 0 12 12"><path d="M0.8,11.2 H8.4 L0.8,4 Z" fill="#7a9ad0" stroke="#16386e" stroke-width="1"/><path d="M2.4,9.6 H5 L2.4,7 Z" fill="#dfe9f8"/><path d="M5.4,5.4 L10.8,1.2" stroke="#d23a2a" stroke-width="1.4" stroke-dasharray="1.8,1"/><circle cx="7.6" cy="3.6" r="1" fill="#138a2e"/></svg><svg style="position:absolute;left:157.6px;top:132.4px" width="11.4" height="11.4" viewBox="0 0 12 12"><path d="M0.8,1.2 H7.6 L11.2,3.8 V11.2 H0.8 Z" fill="#fff" stroke="#d23a2a" stroke-width="1"/><rect x="1.4" y="2.8" width="6.6" height="7.8" fill="#dfe9f8" stroke="#16386e" stroke-width="1.1"/><path d="M2.4,9.6 L7,4" stroke="#16386e" stroke-width="0.9"/></svg><svg style="position:absolute;left:19px;top:147px" width="11.4" height="11.4" viewBox="0 0 12 12"><path d="M3,2.6 H7 M7,2.6 L5.6,1.4 M7,2.6 L5.6,3.8" stroke="#138a2e" stroke-width="1" fill="none"/><path d="M1,6.4 H4 M1,8.4 H4 M1,10.4 H4" stroke="#16386e" stroke-width="1"/><path d="M8,1.6 H10.6 M8,3.8 H10.6 M6,5.8 H8.6" stroke="#d23a2a" stroke-width="1"/><path d="M5,5 V11" stroke="#16386e" stroke-width="0.8"/></svg>
<div style="position:absolute;left:21.4px;top:167.8px;width:157.8px;height:0.7px;background:#c8c8c8;"></div><div style="position:absolute;left:21.4px;top:168.5px;width:153.2px;height:11.8px;background:#ebebeb;"></div><div style="position:absolute;left:21.4px;top:180.3px;width:157.8px;height:0.9px;background:#111;"></div><div style="position:absolute;left:21px;top:168.4px;width:0.9px;height:12.5px;background:#555;"></div><div style="position:absolute;left:71.9px;top:168.4px;width:0.9px;height:12.5px;background:#222;"></div><div style="position:absolute;left:78.5px;top:168.4px;width:0.9px;height:12.5px;background:#222;"></div><div style="position:absolute;left:110.4px;top:168.4px;width:0.9px;height:12.5px;background:#222;"></div><div style="position:absolute;left:142.5px;top:168.4px;width:0.9px;height:12.5px;background:#222;"></div><div style="position:absolute;left:174.5px;top:168.4px;width:0.9px;height:12.5px;background:#222;"></div><div style="position:absolute;left:72px;top:168.4px;width:1px;height:167.8px;background:#111;"></div><div style="position:absolute;left:38.88px;top:168.00px;font-size:8.4px;line-height:12px;color:#111;white-space:nowrap;transform:scaleX(0.800);transform-origin:0 50%;">Sizes</div><div style="position:absolute;left:91.40px;top:168.00px;font-size:8.4px;line-height:12px;color:#111;white-space:nowrap;transform:scaleX(0.800);transform-origin:0 50%;">dx</div><div style="position:absolute;left:123.40px;top:168.00px;font-size:8.4px;line-height:12px;color:#111;white-space:nowrap;transform:scaleX(0.800);transform-origin:0 50%;">dy</div><div style="position:absolute;left:155.26px;top:168.00px;font-size:8.4px;line-height:12px;color:#111;white-space:nowrap;transform:scaleX(0.800);transform-origin:0 50%;">dd</div><div style="position:absolute;left:176.20px;top:170.00px;font-size:7px;line-height:9px;color:#666;white-space:nowrap;">-</div><div style="position:absolute;left:21.4px;top:181px;width:153.2px;height:154.33px;background:#ebebeb;"></div><div style="position:absolute;left:21px;top:181px;width:0.8px;height:154.33px;background:#666;"></div><div style="position:absolute;left:24.2px;top:183.9px;width:7.4px;height:7.4px;background:#fff;border-left:1.2px solid #666;border-top:1.2px solid #666;"></div><div style="position:absolute;left:34.70px;top:182.00px;font-size:8.4px;line-height:12px;color:#000;white-space:nowrap;transform:scaleX(0.878);transform-origin:0 50%;-webkit-text-stroke:0.12px #000;">32</div><div style="position:absolute;left:73px;top:180.6px;width:5.6px;height:14.03px;background:#f01010;"></div><div style="position:absolute;left:92.63px;top:182.00px;font-size:8.4px;line-height:12px;color:#000;white-space:nowrap;transform:scaleX(0.950);transform-origin:0 50%;-webkit-text-stroke:0.12px #000;">0</div><div style="position:absolute;left:124.63px;top:182.00px;font-size:8.4px;line-height:12px;color:#000;white-space:nowrap;transform:scaleX(0.950);transform-origin:0 50%;-webkit-text-stroke:0.12px #000;">0</div><div style="position:absolute;left:156.68px;top:182.00px;font-size:8.4px;line-height:12px;color:#000;white-space:nowrap;transform:scaleX(0.950);transform-origin:0 50%;-webkit-text-stroke:0.12px #000;">0</div><div style="position:absolute;left:21.4px;top:194.13px;width:51.6px;height:1px;background:#111;"></div><div style="position:absolute;left:78.6px;top:194.23px;width:100.6px;height:0.8px;background:#9c9c9c;"></div><div style="position:absolute;left:177.6px;top:183.6px;width:0.8px;height:8.03px;background:#999;"></div><div style="position:absolute;left:24.2px;top:197.93px;width:7.4px;height:7.4px;background:#fff;border-left:1.2px solid #666;border-top:1.2px solid #666;"></div><div style="position:absolute;left:34.70px;top:196.00px;font-size:8.4px;line-height:12px;color:#000;white-space:nowrap;transform:scaleX(0.878);transform-origin:0 50%;-webkit-text-stroke:0.12px #000;">34</div><div style="position:absolute;left:73px;top:194.63px;width:5.6px;height:14.03px;background:#0a7d0f;"></div><div style="position:absolute;left:92.63px;top:196.00px;font-size:8.4px;line-height:12px;color:#000;white-space:nowrap;transform:scaleX(0.950);transform-origin:0 50%;-webkit-text-stroke:0.12px #000;">0</div><div style="position:absolute;left:124.63px;top:196.00px;font-size:8.4px;line-height:12px;color:#000;white-space:nowrap;transform:scaleX(0.950);transform-origin:0 50%;-webkit-text-stroke:0.12px #000;">0</div><div style="position:absolute;left:156.68px;top:196.00px;font-size:8.4px;line-height:12px;color:#000;white-space:nowrap;transform:scaleX(0.950);transform-origin:0 50%;-webkit-text-stroke:0.12px #000;">0</div><div style="position:absolute;left:21.4px;top:208.16px;width:51.6px;height:1px;background:#111;"></div><div style="position:absolute;left:78.6px;top:208.26px;width:100.6px;height:0.8px;background:#9c9c9c;"></div><div style="position:absolute;left:177.6px;top:197.63px;width:0.8px;height:8.03px;background:#999;"></div><div style="position:absolute;left:24.2px;top:211.96px;width:7.4px;height:7.4px;background:#fff;border-left:1.2px solid #666;border-top:1.2px solid #666;"></div><div style="position:absolute;left:34.70px;top:210.00px;font-size:8.4px;line-height:12px;color:#000;white-space:nowrap;transform:scaleX(0.878);transform-origin:0 50%;-webkit-text-stroke:0.12px #000;">36</div><div style="position:absolute;left:73px;top:208.66px;width:5.6px;height:14.03px;background:#ccffff;"></div><div style="position:absolute;left:92.63px;top:210.00px;font-size:8.4px;line-height:12px;color:#000;white-space:nowrap;transform:scaleX(0.950);transform-origin:0 50%;-webkit-text-stroke:0.12px #000;">0</div><div style="position:absolute;left:124.63px;top:210.00px;font-size:8.4px;line-height:12px;color:#000;white-space:nowrap;transform:scaleX(0.950);transform-origin:0 50%;-webkit-text-stroke:0.12px #000;">0</div><div style="position:absolute;left:156.68px;top:210.00px;font-size:8.4px;line-height:12px;color:#000;white-space:nowrap;transform:scaleX(0.950);transform-origin:0 50%;-webkit-text-stroke:0.12px #000;">0</div><div style="position:absolute;left:21.4px;top:222.19px;width:51.6px;height:1px;background:#111;"></div><div style="position:absolute;left:78.6px;top:222.29px;width:100.6px;height:0.8px;background:#9c9c9c;"></div><div style="position:absolute;left:177.6px;top:211.66px;width:0.8px;height:8.03px;background:#999;"></div><div style="position:absolute;left:24.80px;top:224.00px;font-size:8.4px;line-height:12px;color:#000;white-space:nowrap;font-weight:bold;transform:scaleX(0.942);transform-origin:0 50%;">38</div><div style="position:absolute;left:73px;top:222.69px;width:5.6px;height:14.03px;background:#000000;"></div><div style="position:absolute;left:92.63px;top:224.00px;font-size:8.4px;line-height:12px;color:#000;white-space:nowrap;font-weight:bold;transform:scaleX(0.950);transform-origin:0 50%;-webkit-text-stroke:0.12px #000;">0</div><div style="position:absolute;left:124.63px;top:224.00px;font-size:8.4px;line-height:12px;color:#000;white-space:nowrap;font-weight:bold;transform:scaleX(0.950);transform-origin:0 50%;-webkit-text-stroke:0.12px #000;">0</div><div style="position:absolute;left:156.68px;top:224.00px;font-size:8.4px;line-height:12px;color:#000;white-space:nowrap;font-weight:bold;transform:scaleX(0.950);transform-origin:0 50%;-webkit-text-stroke:0.12px #000;">0</div><div style="position:absolute;left:21.4px;top:236.22px;width:51.6px;height:1px;background:#111;"></div><div style="position:absolute;left:78.6px;top:236.32px;width:100.6px;height:0.8px;background:#9c9c9c;"></div><div style="position:absolute;left:177.6px;top:225.69px;width:0.8px;height:8.03px;background:#999;"></div><div style="position:absolute;left:24.2px;top:240.02px;width:7.4px;height:7.4px;background:#fff;border-left:1.2px solid #666;border-top:1.2px solid #666;"></div><div style="position:absolute;left:34.70px;top:238.00px;font-size:8.4px;line-height:12px;color:#000;white-space:nowrap;transform:scaleX(0.878);transform-origin:0 50%;-webkit-text-stroke:0.12px #000;">40</div><div style="position:absolute;left:73px;top:236.72px;width:5.6px;height:14.03px;background:#f01010;"></div><div style="position:absolute;left:92.63px;top:238.00px;font-size:8.4px;line-height:12px;color:#000;white-space:nowrap;transform:scaleX(0.950);transform-origin:0 50%;-webkit-text-stroke:0.12px #000;">0</div><div style="position:absolute;left:124.63px;top:238.00px;font-size:8.4px;line-height:12px;color:#000;white-space:nowrap;transform:scaleX(0.950);transform-origin:0 50%;-webkit-text-stroke:0.12px #000;">0</div><div style="position:absolute;left:156.68px;top:238.00px;font-size:8.4px;line-height:12px;color:#000;white-space:nowrap;transform:scaleX(0.950);transform-origin:0 50%;-webkit-text-stroke:0.12px #000;">0</div><div style="position:absolute;left:21.4px;top:250.25px;width:51.6px;height:1px;background:#111;"></div><div style="position:absolute;left:78.6px;top:250.35px;width:100.6px;height:0.8px;background:#9c9c9c;"></div><div style="position:absolute;left:177.6px;top:239.72px;width:0.8px;height:8.03px;background:#999;"></div><div style="position:absolute;left:24.2px;top:254.05px;width:7.4px;height:7.4px;background:#fff;border-left:1.2px solid #666;border-top:1.2px solid #666;"></div><div style="position:absolute;left:34.70px;top:252.00px;font-size:8.4px;line-height:12px;color:#000;white-space:nowrap;transform:scaleX(0.878);transform-origin:0 50%;-webkit-text-stroke:0.12px #000;">42</div><div style="position:absolute;left:73px;top:250.75px;width:5.6px;height:14.03px;background:#f510f5;"></div><div style="position:absolute;left:92.63px;top:252.00px;font-size:8.4px;line-height:12px;color:#000;white-space:nowrap;transform:scaleX(0.950);transform-origin:0 50%;-webkit-text-stroke:0.12px #000;">0</div><div style="position:absolute;left:124.63px;top:252.00px;font-size:8.4px;line-height:12px;color:#000;white-space:nowrap;transform:scaleX(0.950);transform-origin:0 50%;-webkit-text-stroke:0.12px #000;">0</div><div style="position:absolute;left:156.68px;top:252.00px;font-size:8.4px;line-height:12px;color:#000;white-space:nowrap;transform:scaleX(0.950);transform-origin:0 50%;-webkit-text-stroke:0.12px #000;">0</div><div style="position:absolute;left:21.4px;top:264.28px;width:51.6px;height:1px;background:#111;"></div><div style="position:absolute;left:78.6px;top:264.38px;width:100.6px;height:0.8px;background:#9c9c9c;"></div><div style="position:absolute;left:177.6px;top:253.75px;width:0.8px;height:8.03px;background:#999;"></div><div style="position:absolute;left:24.2px;top:268.08px;width:7.4px;height:7.4px;background:#fff;border-left:1.2px solid #666;border-top:1.2px solid #666;"></div><div style="position:absolute;left:34.70px;top:266.00px;font-size:8.4px;line-height:12px;color:#000;white-space:nowrap;transform:scaleX(0.878);transform-origin:0 50%;-webkit-text-stroke:0.12px #000;">44</div><div style="position:absolute;left:73px;top:264.78px;width:5.6px;height:14.03px;background:#0a7a10;"></div><div style="position:absolute;left:92.63px;top:266.00px;font-size:8.4px;line-height:12px;color:#000;white-space:nowrap;transform:scaleX(0.950);transform-origin:0 50%;-webkit-text-stroke:0.12px #000;">0</div><div style="position:absolute;left:124.63px;top:266.00px;font-size:8.4px;line-height:12px;color:#000;white-space:nowrap;transform:scaleX(0.950);transform-origin:0 50%;-webkit-text-stroke:0.12px #000;">0</div><div style="position:absolute;left:156.68px;top:266.00px;font-size:8.4px;line-height:12px;color:#000;white-space:nowrap;transform:scaleX(0.950);transform-origin:0 50%;-webkit-text-stroke:0.12px #000;">0</div><div style="position:absolute;left:21.4px;top:278.31px;width:51.6px;height:1px;background:#111;"></div><div style="position:absolute;left:78.6px;top:278.41px;width:100.6px;height:0.8px;background:#9c9c9c;"></div><div style="position:absolute;left:177.6px;top:267.78px;width:0.8px;height:8.03px;background:#999;"></div><div style="position:absolute;left:24.2px;top:282.11px;width:7.4px;height:7.4px;background:#fff;border-left:1.2px solid #666;border-top:1.2px solid #666;"></div><div style="position:absolute;left:34.70px;top:280.00px;font-size:8.4px;line-height:12px;color:#000;white-space:nowrap;transform:scaleX(0.878);transform-origin:0 50%;-webkit-text-stroke:0.12px #000;">46</div><div style="position:absolute;left:73px;top:278.81px;width:5.6px;height:14.03px;background:#0a7f8a;"></div><div style="position:absolute;left:92.63px;top:280.00px;font-size:8.4px;line-height:12px;color:#000;white-space:nowrap;transform:scaleX(0.950);transform-origin:0 50%;-webkit-text-stroke:0.12px #000;">0</div><div style="position:absolute;left:124.63px;top:280.00px;font-size:8.4px;line-height:12px;color:#000;white-space:nowrap;transform:scaleX(0.950);transform-origin:0 50%;-webkit-text-stroke:0.12px #000;">0</div><div style="position:absolute;left:156.68px;top:280.00px;font-size:8.4px;line-height:12px;color:#000;white-space:nowrap;transform:scaleX(0.950);transform-origin:0 50%;-webkit-text-stroke:0.12px #000;">0</div><div style="position:absolute;left:21.4px;top:292.34px;width:51.6px;height:1px;background:#111;"></div><div style="position:absolute;left:78.6px;top:292.44px;width:100.6px;height:0.8px;background:#9c9c9c;"></div><div style="position:absolute;left:177.6px;top:281.81px;width:0.8px;height:8.03px;background:#999;"></div><div style="position:absolute;left:24.2px;top:296.14px;width:7.4px;height:7.4px;background:#fff;border-left:1.2px solid #666;border-top:1.2px solid #666;"></div><div style="position:absolute;left:34.70px;top:294.00px;font-size:8.4px;line-height:12px;color:#000;white-space:nowrap;transform:scaleX(0.878);transform-origin:0 50%;-webkit-text-stroke:0.12px #000;">48</div><div style="position:absolute;left:73px;top:292.84px;width:5.6px;height:14.03px;background:#6a55b8;"></div><div style="position:absolute;left:92.63px;top:294.00px;font-size:8.4px;line-height:12px;color:#000;white-space:nowrap;transform:scaleX(0.950);transform-origin:0 50%;-webkit-text-stroke:0.12px #000;">0</div><div style="position:absolute;left:124.63px;top:294.00px;font-size:8.4px;line-height:12px;color:#000;white-space:nowrap;transform:scaleX(0.950);transform-origin:0 50%;-webkit-text-stroke:0.12px #000;">0</div><div style="position:absolute;left:156.68px;top:294.00px;font-size:8.4px;line-height:12px;color:#000;white-space:nowrap;transform:scaleX(0.950);transform-origin:0 50%;-webkit-text-stroke:0.12px #000;">0</div><div style="position:absolute;left:21.4px;top:306.37px;width:51.6px;height:1px;background:#111;"></div><div style="position:absolute;left:78.6px;top:306.47px;width:100.6px;height:0.8px;background:#9c9c9c;"></div><div style="position:absolute;left:177.6px;top:295.84px;width:0.8px;height:8.03px;background:#999;"></div><div style="position:absolute;left:24.2px;top:310.17px;width:7.4px;height:7.4px;background:#fff;border-left:1.2px solid #666;border-top:1.2px solid #666;"></div><div style="position:absolute;left:34.70px;top:308.00px;font-size:8.4px;line-height:12px;color:#000;white-space:nowrap;transform:scaleX(0.878);transform-origin:0 50%;-webkit-text-stroke:0.12px #000;">50</div><div style="position:absolute;left:73px;top:306.87px;width:5.6px;height:14.03px;background:#74bb14;"></div><div style="position:absolute;left:92.63px;top:308.00px;font-size:8.4px;line-height:12px;color:#000;white-space:nowrap;transform:scaleX(0.950);transform-origin:0 50%;-webkit-text-stroke:0.12px #000;">0</div><div style="position:absolute;left:124.63px;top:308.00px;font-size:8.4px;line-height:12px;color:#000;white-space:nowrap;transform:scaleX(0.950);transform-origin:0 50%;-webkit-text-stroke:0.12px #000;">0</div><div style="position:absolute;left:156.68px;top:308.00px;font-size:8.4px;line-height:12px;color:#000;white-space:nowrap;transform:scaleX(0.950);transform-origin:0 50%;-webkit-text-stroke:0.12px #000;">0</div><div style="position:absolute;left:21.4px;top:320.4px;width:51.6px;height:1px;background:#111;"></div><div style="position:absolute;left:78.6px;top:320.5px;width:100.6px;height:0.8px;background:#9c9c9c;"></div><div style="position:absolute;left:177.6px;top:309.87px;width:0.8px;height:8.03px;background:#999;"></div><div style="position:absolute;left:24.2px;top:324.2px;width:7.4px;height:7.4px;background:#fff;border-left:1.2px solid #666;border-top:1.2px solid #666;"></div><div style="position:absolute;left:34.70px;top:322.00px;font-size:8.4px;line-height:12px;color:#000;white-space:nowrap;transform:scaleX(0.878);transform-origin:0 50%;-webkit-text-stroke:0.12px #000;">52</div><div style="position:absolute;left:73px;top:320.9px;width:5.6px;height:14.03px;background:#44aa38;"></div><div style="position:absolute;left:92.63px;top:322.00px;font-size:8.4px;line-height:12px;color:#000;white-space:nowrap;transform:scaleX(0.950);transform-origin:0 50%;-webkit-text-stroke:0.12px #000;">0</div><div style="position:absolute;left:124.63px;top:322.00px;font-size:8.4px;line-height:12px;color:#000;white-space:nowrap;transform:scaleX(0.950);transform-origin:0 50%;-webkit-text-stroke:0.12px #000;">0</div><div style="position:absolute;left:156.68px;top:322.00px;font-size:8.4px;line-height:12px;color:#000;white-space:nowrap;transform:scaleX(0.950);transform-origin:0 50%;-webkit-text-stroke:0.12px #000;">0</div><div style="position:absolute;left:21.4px;top:334.43px;width:51.6px;height:1px;background:#111;"></div><div style="position:absolute;left:78.6px;top:334.53px;width:100.6px;height:0.8px;background:#9c9c9c;"></div><div style="position:absolute;left:177.6px;top:323.9px;width:0.8px;height:8.03px;background:#999;"></div><div style="position:absolute;left:78.5px;top:181px;width:0.7px;height:154.33px;background:#aaa;"></div><div style="position:absolute;left:110.4px;top:181px;width:0.8px;height:154.33px;background:#999;"></div><div style="position:absolute;left:142.5px;top:181px;width:0.8px;height:154.33px;background:#999;"></div><div style="position:absolute;left:174.5px;top:181px;width:0.8px;height:154.33px;background:#999;"></div>
<div style="position:absolute;left:21px;top:617px;width:157px;height:10px;background:#f4f4f4;"></div>
<div style="position:absolute;left:32px;top:618.2px;width:10.4px;height:7.8px;background:#cdcdcd;"></div>
<svg style="position:absolute;left:23.6px;top:619px" width="4.4" height="6" viewBox="0 0 4.4 6"><path d="M3.4,0.6 L1,3 L3.4,5.4" fill="none" stroke="#333" stroke-width="1.1"/></svg>
<svg style="position:absolute;left:171.2px;top:619px" width="4.4" height="6" viewBox="0 0 4.4 6"><path d="M1,0.6 L3.4,3 L1,5.4" fill="none" stroke="#333" stroke-width="1.1"/></svg>
<div style="position:absolute;left:185.3px;top:64px;width:1.8px;height:569.6px;background:#6e6e6e;"></div>
<div style="position:absolute;left:187.1px;top:64px;width:127.4px;height:569.6px;background:#ebebeb;"></div>
<div style="position:absolute;left:187.1px;top:64.4px;width:127.4px;height:15.2px;background:#adadad;"></div>
<div style="position:absolute;left:189px;top:67px;width:1.4px;height:10px;background:repeating-linear-gradient(#333 0 1.2px,transparent 1.2px 2.4px)"></div>
<div style="position:absolute;left:195.70px;top:67.00px;font-size:8.2px;line-height:11px;color:#4c4c4c;white-space:nowrap;font-weight:bold;transform:scaleX(1.036);transform-origin:0 50%;">Rules Library</div>
<svg style="position:absolute;left:294.1px;top:69px" width="5" height="7" viewBox="0 0 5 7"><path d="M1.4,0.6 H3.6 V3.6 H1.4 Z M0.4,3.8 H4.6 M2.5,3.8 V6.6" fill="none" stroke="#444" stroke-width="0.7"/></svg><svg style="position:absolute;left:303.6px;top:69.6px" width="5.6" height="5.6" viewBox="0 0 5.6 5.6"><path d="M0.5,0.5 L5.1,5.1 M5.1,0.5 L0.5,5.1" stroke="#444" stroke-width="0.9"/></svg>
<svg style="position:absolute;left:190px;top:83px" width="11.6" height="11.6" viewBox="0 0 12 12"><rect x="3" y="2" width="8" height="9.4" rx="0.6" fill="#dcecfb" stroke="#1f4e8c" stroke-width="0.9"/><rect x="0.8" y="0.8" width="5" height="7" fill="#b81c24" stroke="#6a0c12" stroke-width="0.6"/><rect x="1.8" y="2.6" width="1.6" height="1.4" fill="#fff"/></svg>
<svg style="position:absolute;left:205px;top:83px" width="11.6" height="11.6" viewBox="0 0 12 12"><rect x="0.8" y="0.8" width="10.4" height="10.4" rx="1.2" fill="#dcecfb" stroke="#1f4e8c" stroke-width="1"/><path d="M2.4,9.4 V3.4 H5 L5.8,4.4 H9 V5.6 M2.4,9.4 L4,5.8 H10.4 L9,9.4 Z" fill="#fff" stroke="#1f4e8c" stroke-width="0.8"/></svg>
<svg style="position:absolute;left:220px;top:83px" width="11.6" height="11.6" viewBox="0 0 12 12"><rect x="0.8" y="0.8" width="10.4" height="10.4" rx="1.2" fill="#dcecfb" stroke="#1f4e8c" stroke-width="1"/><rect x="2" y="3.4" width="8" height="7.6" rx="0.6" fill="#1f4e8c"/><rect x="3.4" y="3.8" width="5" height="2.6" fill="#fff"/><rect x="4" y="8" width="4" height="3" fill="#dbe8f8"/></svg>
<svg style="position:absolute;left:239.4px;top:83px" width="11.6" height="11.6" viewBox="0 0 12 12"><rect x="3.4" y="0.8" width="7.8" height="6.6" rx="0.8" fill="#dcecfb" stroke="#1f4e8c" stroke-width="1"/><rect x="0.8" y="4" width="7.8" height="6.8" rx="0.8" fill="#dcecfb" stroke="#1f4e8c" stroke-width="1"/></svg>
<svg style="position:absolute;left:254.6px;top:83px" width="11.6" height="11.6" viewBox="0 0 12 12"><rect x="2.6" y="1.4" width="8.6" height="9.6" rx="0.6" fill="#f4e6d0" stroke="#8a5a2a" stroke-width="0.8"/><rect x="5" y="0.6" width="3.6" height="1.8" fill="#8a5a2a"/><rect x="0.8" y="4.4" width="7.6" height="6.6" rx="0.6" fill="#dcecfb" stroke="#1f4e8c" stroke-width="1"/></svg>
<svg style="position:absolute;left:270.4px;top:83px" width="11.6" height="11.6" viewBox="0 0 12 12"><rect x="0.8" y="0.8" width="5.2" height="10.2" fill="#9a1a22" stroke="#5a0c12" stroke-width="0.6"/><rect x="4" y="2.4" width="7.2" height="6" rx="0.6" fill="#dcecfb" stroke="#1f4e8c" stroke-width="1"/><rect x="5.6" y="4.4" width="4" height="2" fill="#fff"/></svg>
<svg style="position:absolute;left:286px;top:83px" width="11.6" height="11.6" viewBox="0 0 12 12"><rect x="0.8" y="0.8" width="10.4" height="10.4" rx="0.8" fill="#dcecfb" stroke="#1f4e8c" stroke-width="1.1"/><rect x="0.8" y="0.8" width="10.4" height="2" fill="#1f4e8c"/><path d="M3,6.8 L5.2,9.4 L9.4,3.8" fill="none" stroke="#1f9a2a" stroke-width="1.8"/></svg>
<div style="position:absolute;left:235.7px;top:83.5px;width:0.8px;height:11px;background:#b0b0b0;"></div>
<div style="position:absolute;left:190.10px;top:102.00px;font-size:7.7px;line-height:11px;color:#111;white-space:nowrap;transform:scaleX(0.880);transform-origin:0 50%;">AAMA_st...</div>
<div style="position:absolute;left:228.90px;top:102.00px;font-size:7.7px;line-height:11px;color:#111;white-space:nowrap;transform:scaleX(0.869);transform-origin:0 50%;">Rules</div>
<div style="position:absolute;left:251px;top:101.6px;width:59.4px;height:12.8px;background:#fff;border:0.6px solid #c4c4c4;"></div>
<div style="position:absolute;left:253.10px;top:102.00px;font-size:7.7px;line-height:11px;color:#111;white-space:nowrap;transform:scaleX(0.851);transform-origin:0 50%;">@1</div>
<svg style="position:absolute;left:302px;top:105.6px" width="6" height="5" viewBox="0 0 6 5"><path d="M0.8,1 L3,3.6 L5.2,1" fill="none" stroke="#222" stroke-width="1"/></svg>
<div style="position:absolute;left:186.8px;top:129.3px;width:26.4px;height:134.54px;background:#e8e8e8;"></div><div style="position:absolute;left:213.2px;top:129.3px;width:64px;height:10.9px;background:#fff;"></div><div style="position:absolute;left:213.2px;top:140.2px;width:64px;height:10.1px;background:#e8e8e8;"></div><div style="position:absolute;left:213.2px;top:151.2px;width:64px;height:112.64px;background:#fff;"></div><div style="position:absolute;left:186.8px;top:129px;width:90.4px;height:0.7px;background:#bbb;"></div><div style="position:absolute;left:186.8px;top:140.2px;width:91.3px;height:1px;background:#111;"></div><div style="position:absolute;left:186.8px;top:150.3px;width:91.3px;height:1px;background:#111;"></div><div style="position:absolute;left:212.7px;top:129.3px;width:1.1px;height:134.54px;background:#111;"></div><div style="position:absolute;left:277.2px;top:129.3px;width:1px;height:21px;background:#111;"></div><div style="position:absolute;left:244.9px;top:140.2px;width:1px;height:10.1px;background:#111;"></div><div style="position:absolute;left:213.8px;top:141.2px;width:30.9px;height:0.7px;background:#fff;"></div><div style="position:absolute;left:245.9px;top:141.2px;width:31.1px;height:0.7px;background:#fff;"></div><div style="position:absolute;left:241.30px;top:130.00px;font-size:7.8px;line-height:11px;color:#111;white-space:nowrap;transform:scaleX(0.900);transform-origin:0 50%;">[1]</div><div style="position:absolute;left:189.90px;top:140.00px;font-size:8.2px;line-height:11px;color:#111;white-space:nowrap;transform:scaleX(0.788);transform-origin:0 50%;">Sizes</div><div style="position:absolute;left:226.90px;top:140.00px;font-size:8.2px;line-height:11px;color:#111;white-space:nowrap;transform:scaleX(0.843);transform-origin:0 50%;">dx</div><div style="position:absolute;left:257.57px;top:140.00px;font-size:8.2px;line-height:11px;color:#111;white-space:nowrap;transform:scaleX(0.850);transform-origin:0 50%;">dy</div><div style="position:absolute;left:190.30px;top:150.00px;font-size:8.4px;line-height:12px;color:#000;white-space:nowrap;transform:scaleX(0.845);transform-origin:0 50%;-webkit-text-stroke:0.12px #000;">32</div><div style="position:absolute;left:227.84px;top:150.00px;font-size:8.4px;line-height:12px;color:#000;white-space:nowrap;transform:scaleX(0.860);transform-origin:0 50%;-webkit-text-stroke:0.12px #000;">0</div><div style="position:absolute;left:255.35px;top:150.00px;font-size:8.4px;line-height:12px;color:#000;white-space:nowrap;transform:scaleX(0.820);transform-origin:0 50%;-webkit-text-stroke:0.12px #000;">0.15</div><div style="position:absolute;left:186.8px;top:160.44px;width:26.4px;height:1px;background:#111;"></div><div style="position:absolute;left:213.8px;top:160.54px;width:63.4px;height:0.7px;background:#c4c4c4;"></div><div style="position:absolute;left:190.30px;top:161.00px;font-size:8.4px;line-height:12px;color:#000;white-space:nowrap;transform:scaleX(0.845);transform-origin:0 50%;-webkit-text-stroke:0.12px #000;">34</div><div style="position:absolute;left:227.84px;top:161.00px;font-size:8.4px;line-height:12px;color:#000;white-space:nowrap;transform:scaleX(0.860);transform-origin:0 50%;-webkit-text-stroke:0.12px #000;">0</div><div style="position:absolute;left:255.35px;top:161.00px;font-size:8.4px;line-height:12px;color:#000;white-space:nowrap;transform:scaleX(0.820);transform-origin:0 50%;-webkit-text-stroke:0.12px #000;">0.15</div><div style="position:absolute;left:186.8px;top:170.68px;width:26.4px;height:1px;background:#111;"></div><div style="position:absolute;left:213.8px;top:170.78px;width:63.4px;height:0.7px;background:#c4c4c4;"></div><div style="position:absolute;left:190.30px;top:171.00px;font-size:8.4px;line-height:12px;color:#000;white-space:nowrap;transform:scaleX(0.845);transform-origin:0 50%;-webkit-text-stroke:0.12px #000;">36</div><div style="position:absolute;left:227.84px;top:171.00px;font-size:8.4px;line-height:12px;color:#000;white-space:nowrap;transform:scaleX(0.860);transform-origin:0 50%;-webkit-text-stroke:0.12px #000;">0</div><div style="position:absolute;left:255.35px;top:171.00px;font-size:8.4px;line-height:12px;color:#000;white-space:nowrap;transform:scaleX(0.820);transform-origin:0 50%;-webkit-text-stroke:0.12px #000;">0.15</div><div style="position:absolute;left:186.8px;top:180.92px;width:26.4px;height:1px;background:#111;"></div><div style="position:absolute;left:213.8px;top:181.02px;width:63.4px;height:0.7px;background:#c4c4c4;"></div><div style="position:absolute;left:213.8px;top:181.92px;width:63.4px;height:9.24px;background:#e8e8e8;"></div><div style="position:absolute;left:190.30px;top:181.00px;font-size:8.4px;line-height:12px;color:#000;white-space:nowrap;font-weight:bold;transform:scaleX(0.910);transform-origin:0 50%;-webkit-text-stroke:0.12px #000;">38</div><div style="position:absolute;left:227.84px;top:181.00px;font-size:8.4px;line-height:12px;color:#000;white-space:nowrap;font-weight:bold;transform:scaleX(0.860);transform-origin:0 50%;-webkit-text-stroke:0.12px #000;">0</div><div style="position:absolute;left:260.13px;top:181.00px;font-size:8.4px;line-height:12px;color:#000;white-space:nowrap;font-weight:bold;transform:scaleX(0.820);transform-origin:0 50%;-webkit-text-stroke:0.12px #000;">0</div><div style="position:absolute;left:186.8px;top:191.16px;width:26.4px;height:1px;background:#111;"></div><div style="position:absolute;left:213.8px;top:191.26px;width:63.4px;height:0.7px;background:#c4c4c4;"></div><div style="position:absolute;left:190.30px;top:191.00px;font-size:8.4px;line-height:12px;color:#000;white-space:nowrap;transform:scaleX(0.845);transform-origin:0 50%;-webkit-text-stroke:0.12px #000;">40</div><div style="position:absolute;left:227.84px;top:191.00px;font-size:8.4px;line-height:12px;color:#000;white-space:nowrap;transform:scaleX(0.860);transform-origin:0 50%;-webkit-text-stroke:0.12px #000;">0</div><div style="position:absolute;left:254.20px;top:191.00px;font-size:8.4px;line-height:12px;color:#000;white-space:nowrap;transform:scaleX(0.820);transform-origin:0 50%;-webkit-text-stroke:0.12px #000;">-0.15</div><div style="position:absolute;left:186.8px;top:201.4px;width:26.4px;height:1px;background:#111;"></div><div style="position:absolute;left:213.8px;top:201.5px;width:63.4px;height:0.7px;background:#c4c4c4;"></div><div style="position:absolute;left:190.30px;top:201.00px;font-size:8.4px;line-height:12px;color:#000;white-space:nowrap;transform:scaleX(0.845);transform-origin:0 50%;-webkit-text-stroke:0.12px #000;">42</div><div style="position:absolute;left:227.84px;top:201.00px;font-size:8.4px;line-height:12px;color:#000;white-space:nowrap;transform:scaleX(0.860);transform-origin:0 50%;-webkit-text-stroke:0.12px #000;">0</div><div style="position:absolute;left:254.20px;top:201.00px;font-size:8.4px;line-height:12px;color:#000;white-space:nowrap;transform:scaleX(0.820);transform-origin:0 50%;-webkit-text-stroke:0.12px #000;">-0.15</div><div style="position:absolute;left:186.8px;top:211.64px;width:26.4px;height:1px;background:#111;"></div><div style="position:absolute;left:213.8px;top:211.74px;width:63.4px;height:0.7px;background:#c4c4c4;"></div><div style="position:absolute;left:190.30px;top:212.00px;font-size:8.4px;line-height:12px;color:#000;white-space:nowrap;transform:scaleX(0.845);transform-origin:0 50%;-webkit-text-stroke:0.12px #000;">44</div><div style="position:absolute;left:227.84px;top:212.00px;font-size:8.4px;line-height:12px;color:#000;white-space:nowrap;transform:scaleX(0.860);transform-origin:0 50%;-webkit-text-stroke:0.12px #000;">0</div><div style="position:absolute;left:254.20px;top:212.00px;font-size:8.4px;line-height:12px;color:#000;white-space:nowrap;transform:scaleX(0.820);transform-origin:0 50%;-webkit-text-stroke:0.12px #000;">-0.15</div><div style="position:absolute;left:186.8px;top:221.88px;width:26.4px;height:1px;background:#111;"></div><div style="position:absolute;left:213.8px;top:221.98px;width:63.4px;height:0.7px;background:#c4c4c4;"></div><div style="position:absolute;left:190.30px;top:222.00px;font-size:8.4px;line-height:12px;color:#000;white-space:nowrap;transform:scaleX(0.845);transform-origin:0 50%;-webkit-text-stroke:0.12px #000;">46</div><div style="position:absolute;left:227.84px;top:222.00px;font-size:8.4px;line-height:12px;color:#000;white-space:nowrap;transform:scaleX(0.860);transform-origin:0 50%;-webkit-text-stroke:0.12px #000;">0</div><div style="position:absolute;left:254.20px;top:222.00px;font-size:8.4px;line-height:12px;color:#000;white-space:nowrap;transform:scaleX(0.820);transform-origin:0 50%;-webkit-text-stroke:0.12px #000;">-0.22</div><div style="position:absolute;left:186.8px;top:232.12px;width:26.4px;height:1px;background:#111;"></div><div style="position:absolute;left:213.8px;top:232.22px;width:63.4px;height:0.7px;background:#c4c4c4;"></div><div style="position:absolute;left:190.30px;top:232.00px;font-size:8.4px;line-height:12px;color:#000;white-space:nowrap;transform:scaleX(0.845);transform-origin:0 50%;-webkit-text-stroke:0.12px #000;">48</div><div style="position:absolute;left:227.84px;top:232.00px;font-size:8.4px;line-height:12px;color:#000;white-space:nowrap;transform:scaleX(0.860);transform-origin:0 50%;-webkit-text-stroke:0.12px #000;">0</div><div style="position:absolute;left:254.20px;top:232.00px;font-size:8.4px;line-height:12px;color:#000;white-space:nowrap;transform:scaleX(0.820);transform-origin:0 50%;-webkit-text-stroke:0.12px #000;">-0.22</div><div style="position:absolute;left:186.8px;top:242.36px;width:26.4px;height:1px;background:#111;"></div><div style="position:absolute;left:213.8px;top:242.46px;width:63.4px;height:0.7px;background:#c4c4c4;"></div><div style="position:absolute;left:190.30px;top:242.00px;font-size:8.4px;line-height:12px;color:#000;white-space:nowrap;transform:scaleX(0.845);transform-origin:0 50%;-webkit-text-stroke:0.12px #000;">50</div><div style="position:absolute;left:227.84px;top:242.00px;font-size:8.4px;line-height:12px;color:#000;white-space:nowrap;transform:scaleX(0.860);transform-origin:0 50%;-webkit-text-stroke:0.12px #000;">0</div><div style="position:absolute;left:254.20px;top:242.00px;font-size:8.4px;line-height:12px;color:#000;white-space:nowrap;transform:scaleX(0.820);transform-origin:0 50%;-webkit-text-stroke:0.12px #000;">-0.22</div><div style="position:absolute;left:186.8px;top:252.6px;width:26.4px;height:1px;background:#111;"></div><div style="position:absolute;left:213.8px;top:252.7px;width:63.4px;height:0.7px;background:#c4c4c4;"></div><div style="position:absolute;left:190.30px;top:253.00px;font-size:8.4px;line-height:12px;color:#000;white-space:nowrap;transform:scaleX(0.845);transform-origin:0 50%;-webkit-text-stroke:0.12px #000;">52</div><div style="position:absolute;left:227.84px;top:253.00px;font-size:8.4px;line-height:12px;color:#000;white-space:nowrap;transform:scaleX(0.860);transform-origin:0 50%;-webkit-text-stroke:0.12px #000;">0</div><div style="position:absolute;left:254.20px;top:253.00px;font-size:8.4px;line-height:12px;color:#000;white-space:nowrap;transform:scaleX(0.820);transform-origin:0 50%;-webkit-text-stroke:0.12px #000;">-0.22</div><div style="position:absolute;left:186.8px;top:262.84px;width:26.4px;height:1px;background:#111;"></div><div style="position:absolute;left:213.8px;top:262.94px;width:63.4px;height:0.7px;background:#c4c4c4;"></div><div style="position:absolute;left:245px;top:151.2px;width:0.7px;height:112.64px;background:#bdbdbd;"></div><div style="position:absolute;left:277.2px;top:151.2px;width:0.7px;height:112.64px;background:#bdbdbd;"></div>
<div style="position:absolute;left:187.1px;top:623.8px;width:127.4px;height:9.8px;background:#f4f4f4;"></div>
<div style="position:absolute;left:197px;top:624.6px;width:61px;height:7.6px;background:#cdcdcd;"></div>
<svg style="position:absolute;left:189.4px;top:625.4px" width="4.4" height="6" viewBox="0 0 4.4 6"><path d="M3.4,0.6 L1,3 L3.4,5.4" fill="none" stroke="#333" stroke-width="1.1"/></svg>
<svg style="position:absolute;left:307px;top:625.4px" width="4.4" height="6" viewBox="0 0 4.4 6"><path d="M1,0.6 L3.4,3 L1,5.4" fill="none" stroke="#333" stroke-width="1.1"/></svg>
<div style="position:absolute;left:314.5px;top:64px;width:0.8px;height:569.6px;background:#8a8a8a;"></div>
<svg width="1229" height="666" viewBox="0 0 1229 666" style="position:absolute;left:0;top:0">
<rect x="315" y="64" width="899.3" height="569.3" fill="#999999"/>
<path d="M364.0,325.0 C363.9,322.2 364.0,313.3 363.5,308.0 C363.0,302.7 362.4,296.8 361.0,293.0 C359.6,289.2 356.9,286.6 355.0,285.0 C353.1,283.4 350.5,283.5 349.6,283.2 L365.2,230.8 C367.7,231.3 373.5,232.8 380.1,234.0 C386.7,235.2 396.3,237.1 404.8,238.0 C413.3,238.9 424.1,239.4 431.3,239.2 C438.5,239.0 443.2,238.6 448.0,236.8 C452.8,235.0 457.0,231.8 460.0,228.4 C463.0,225.0 464.6,220.9 466.0,216.4 C467.4,211.9 467.9,203.8 468.3,201.3 C473.6,202.3 488.1,205.5 500.0,207.5 C511.9,209.5 528.0,212.2 540.0,213.5 C552.0,214.8 562.2,215.3 572.2,215.3 C582.2,215.3 588.7,214.9 600.0,213.5 C611.3,212.1 628.3,208.8 640.0,207.0 C651.7,205.2 661.6,203.4 670.0,202.5 C678.4,201.6 687.2,201.5 690.6,201.3 C691.1,203.8 691.6,209.9 693.7,216.4 C695.8,222.9 700.1,233.2 703.3,240.4 C706.5,247.6 709.9,254.0 712.9,259.6 C715.9,265.2 719.1,268.5 721.3,274.1 C723.5,279.7 725.0,286.9 726.1,293.3 C727.2,299.7 727.7,307.2 728.1,312.5 C728.5,317.8 728.4,322.9 728.5,325.0 C728.4,327.1 728.5,332.2 728.1,337.5 C727.7,342.8 727.2,350.3 726.1,356.7 C725.0,363.1 723.5,370.3 721.3,375.9 C719.1,381.5 715.9,384.8 712.9,390.4 C709.9,396.0 706.5,402.4 703.3,409.6 C700.1,416.8 695.8,427.1 693.7,433.6 C691.6,440.1 691.1,446.2 690.6,448.7 C687.2,448.5 678.4,448.4 670.0,447.5 C661.6,446.6 651.7,444.8 640.0,443.0 C628.3,441.2 611.3,437.9 600.0,436.5 C588.7,435.1 582.2,434.7 572.2,434.7 C562.2,434.7 552.0,435.2 540.0,436.5 C528.0,437.8 511.9,440.5 500.0,442.5 C488.1,444.5 473.6,447.7 468.3,448.7 C467.9,446.2 467.4,438.1 466.0,433.6 C464.6,429.1 463.0,425.0 460.0,421.6 C457.0,418.2 452.8,415.0 448.0,413.2 C443.2,411.4 438.5,411.0 431.3,410.8 C424.1,410.6 413.3,411.1 404.8,412.0 C396.3,412.9 386.7,414.8 380.1,416.0 C373.5,417.2 367.7,418.7 365.2,419.2 L349.6,366.8 C350.5,366.5 353.1,366.6 355.0,365.0 C356.9,363.4 359.6,360.8 361.0,357.0 C362.4,353.2 363.0,347.3 363.5,342.0 C364.0,336.7 363.9,327.8 364.0,325.0 Z" fill="#99ccff" stroke="#0a1a2a" stroke-width="1"/>
<path d="M367.0,325.0 C366.9,322.2 366.9,312.8 366.5,308.0 C366.1,303.2 365.4,299.3 364.5,296.0 C363.6,292.7 362.4,290.1 361.0,288.0 C359.6,285.9 357.1,284.0 356.3,283.2 L369.5,237.8 C371.3,238.2 374.6,239.2 380.5,240.3 C386.4,241.4 396.5,243.4 405.0,244.3 C413.5,245.2 424.0,245.7 431.3,245.5 C438.6,245.3 443.6,245.0 449.0,243.0 C454.4,241.0 459.8,237.3 463.5,233.5 C467.2,229.7 469.3,224.2 471.0,220.0 C472.7,215.8 473.1,210.4 473.5,208.5 C477.9,209.4 488.9,212.1 500.0,214.0 C511.1,215.9 528.0,218.7 540.0,220.0 C552.0,221.3 562.2,221.7 572.2,221.7 C582.2,221.7 588.7,221.4 600.0,220.0 C611.3,218.6 627.2,215.4 640.0,213.5 C652.8,211.6 670.6,209.3 676.7,208.5 C677.1,211.4 677.3,219.5 679.3,226.0 C681.3,232.5 685.3,240.4 688.9,247.6 C692.5,254.8 697.5,262.1 700.9,269.3 C704.3,276.5 707.3,284.1 709.3,290.9 C711.3,297.7 712.3,304.4 712.9,310.1 C713.5,315.8 712.9,322.5 712.9,325.0 C712.9,327.5 713.5,334.2 712.9,339.9 C712.3,345.6 711.3,352.3 709.3,359.1 C707.3,365.9 704.3,373.5 700.9,380.7 C697.5,387.9 692.5,395.2 688.9,402.4 C685.3,409.6 681.3,417.5 679.3,424.0 C677.3,430.5 677.1,438.6 676.7,441.5 C670.6,440.7 652.8,438.4 640.0,436.5 C627.2,434.6 611.3,431.4 600.0,430.0 C588.7,428.6 582.2,428.3 572.2,428.3 C562.2,428.3 552.0,428.7 540.0,430.0 C528.0,431.3 511.1,434.1 500.0,436.0 C488.9,437.9 477.9,440.6 473.5,441.5 C473.1,439.6 472.7,434.2 471.0,430.0 C469.3,425.8 467.2,420.3 463.5,416.5 C459.8,412.7 454.4,409.0 449.0,407.0 C443.6,405.0 438.6,404.7 431.3,404.5 C424.0,404.3 413.5,404.8 405.0,405.7 C396.5,406.6 386.4,408.6 380.5,409.7 C374.6,410.8 371.3,411.8 369.5,412.2 L356.3,366.8 C357.1,366.0 359.6,364.1 361.0,362.0 C362.4,359.9 363.6,357.3 364.5,354.0 C365.4,350.7 366.1,346.8 366.5,342.0 C366.9,337.2 366.9,327.8 367.0,325.0 Z" fill="none" stroke="#0a1a2a" stroke-width="1"/>
<g fill="none" stroke="#0a1a2a" stroke-width="1">
<path d="M364,325 L712.9,325"/>
<path d="M480,281.7 L572.2,274.3 L642.6,281.7 L572.2,290.4 Z"/>
<path d="M480,367.2 L572.2,359.3 L642.6,367.2 L572.2,374.7 Z"/>
<path d="M428.9,382.4 L630.5,382.4 L618,377.6"/>
</g>
<g fill="#000"><circle cx="365.2" cy="230.8" r="1.7"/><circle cx="369.5" cy="237.8" r="1.7"/><circle cx="380.1" cy="234.0" r="1.7"/><circle cx="380.1" cy="240.0" r="1.7"/><circle cx="431.3" cy="239.2" r="1.7"/><circle cx="431.3" cy="245.5" r="1.7"/><circle cx="468.3" cy="201.3" r="1.7"/><circle cx="473.5" cy="208.5" r="1.7"/><circle cx="349.6" cy="283.2" r="1.7"/><circle cx="356.3" cy="283.2" r="1.7"/><circle cx="572.2" cy="215.3" r="1.7"/><circle cx="572.2" cy="221.7" r="1.7"/><circle cx="690.6" cy="201.3" r="1.7"/><circle cx="676.7" cy="208.5" r="1.7"/><circle cx="365.2" cy="419.2" r="1.7"/><circle cx="369.5" cy="412.2" r="1.7"/><circle cx="380.1" cy="416.0" r="1.7"/><circle cx="380.1" cy="410.0" r="1.7"/><circle cx="431.3" cy="410.8" r="1.7"/><circle cx="431.3" cy="404.5" r="1.7"/><circle cx="468.3" cy="448.7" r="1.7"/><circle cx="473.5" cy="441.5" r="1.7"/><circle cx="349.6" cy="366.8" r="1.7"/><circle cx="356.3" cy="366.8" r="1.7"/><circle cx="572.2" cy="434.7" r="1.7"/><circle cx="572.2" cy="428.3" r="1.7"/><circle cx="690.6" cy="448.7" r="1.7"/><circle cx="676.7" cy="441.5" r="1.7"/><circle cx="364.0" cy="325.0" r="1.7"/><circle cx="367.0" cy="325.0" r="1.7"/><circle cx="712.9" cy="325.0" r="1.7"/><circle cx="728.5" cy="325.0" r="1.7"/><circle cx="480.0" cy="281.7" r="1.7"/><circle cx="572.2" cy="274.3" r="1.7"/><circle cx="642.6" cy="281.7" r="1.7"/><circle cx="572.2" cy="290.4" r="1.7"/><circle cx="480.0" cy="367.2" r="1.7"/><circle cx="572.2" cy="359.3" r="1.7"/><circle cx="642.6" cy="367.2" r="1.7"/><circle cx="572.2" cy="374.7" r="1.7"/></g>
<rect x="350" y="450.3" width="334.3" height="25.1" fill="#99ccff" stroke="#0a1a2a"/>
<g fill="none" stroke="#0a1a2a" stroke-width="1">
<path d="M356.4,456.8 H668.7 M356.4,462.4 H668.7 M356.4,469 H668.7 M356.4,456.8 V469 M668.7,456.8 V469"/>
<path d="M387.3,456.8 V466.5 M423.4,456.8 V466.5 M459.5,456.8 V466.5 M495.7,456.8 V466.5 M531.8,456.8 V466.5 M567.9,456.8 V466.5 M604.0,456.8 V466.5 M640.1,456.8 V466.5"/>
<path d="M594.4,458.3 L604,462"/>
</g>
<g fill="#000"><circle cx="350.0" cy="450.3" r="1.7"/><circle cx="350.0" cy="462.4" r="1.7"/><circle cx="350.0" cy="475.4" r="1.7"/><circle cx="684.3" cy="450.3" r="1.7"/><circle cx="684.3" cy="462.4" r="1.7"/><circle cx="684.3" cy="475.4" r="1.7"/><circle cx="356.4" cy="456.8" r="1.7"/><circle cx="356.4" cy="462.4" r="1.7"/><circle cx="356.4" cy="469.0" r="1.7"/><circle cx="668.7" cy="456.8" r="1.7"/><circle cx="668.7" cy="462.4" r="1.7"/><circle cx="668.7" cy="469.0" r="1.7"/><circle cx="387.3" cy="450.3" r="1.7"/><circle cx="387.3" cy="456.8" r="1.7"/><circle cx="423.4" cy="450.3" r="1.7"/><circle cx="423.4" cy="456.8" r="1.7"/><circle cx="459.5" cy="450.3" r="1.7"/><circle cx="459.5" cy="456.8" r="1.7"/><circle cx="495.7" cy="450.3" r="1.7"/><circle cx="495.7" cy="456.8" r="1.7"/><circle cx="531.8" cy="450.3" r="1.7"/><circle cx="531.8" cy="456.8" r="1.7"/><circle cx="567.9" cy="450.3" r="1.7"/><circle cx="567.9" cy="456.8" r="1.7"/><circle cx="604.0" cy="450.3" r="1.7"/><circle cx="604.0" cy="456.8" r="1.7"/><circle cx="640.1" cy="450.3" r="1.7"/><circle cx="640.1" cy="456.8" r="1.7"/></g>
<path d="M766.9,345.3 L1097.6,345.8 C1097.5,340.6 1097.6,324.1 1096.9,314.5 C1096.2,304.9 1095.5,298.1 1093.3,288.1 C1091.1,278.1 1087.1,265.3 1083.7,254.5 C1080.3,243.7 1075.5,232.1 1072.9,223.2 C1070.3,214.3 1068.7,204.8 1067.9,201.1 C1063.2,201.4 1051.3,201.6 1040.0,203.0 C1028.7,204.4 1011.7,207.7 1000.0,209.5 C988.3,211.3 978.5,213.0 970.0,214.0 C961.5,215.0 957.1,215.2 948.8,215.3 C940.5,215.4 931.4,214.8 920.0,214.3 C908.6,213.8 887.1,212.7 880.5,212.4 L866.8,209.3 L854.1,214.8 L819.8,220.3 C820.1,223.2 822.8,232.5 821.7,237.6 C820.6,242.7 817.9,247.1 813.3,250.9 C808.7,254.7 801.3,258.5 794.1,260.5 C786.9,262.5 778.2,263.2 770.0,262.9 C761.8,262.6 749.0,259.5 744.8,258.8 L729.7,312.6 C732.4,313.4 741.1,315.0 746.0,317.2 C750.9,319.4 755.8,322.2 759.2,325.6 C762.6,329.0 765.1,334.3 766.4,337.6 C767.7,340.9 766.8,344.0 766.9,345.3 Z" fill="#99ccff" stroke="#0a1a2a" stroke-width="1"/>
<path d="M769.6,339.3 L1082.5,339.5 C1082.3,335.3 1082.1,323.1 1081.3,314.5 C1080.5,305.9 1079.9,297.7 1077.7,288.1 C1075.5,278.5 1071.5,266.9 1068.1,256.9 C1064.7,246.9 1059.8,236.1 1057.3,228.0 C1054.8,219.9 1053.9,211.6 1053.2,208.3 C1049.3,208.7 1038.9,209.3 1030.0,210.5 C1021.1,211.7 1010.0,213.8 1000.0,215.5 C990.0,217.2 978.5,219.4 970.0,220.5 C961.5,221.6 957.1,221.7 948.8,221.8 C940.5,221.9 931.6,221.4 920.0,221.0 C908.4,220.6 886.1,219.4 879.3,219.1 L867.3,216.0 L855.8,220.3 L826.5,225.2 C826.5,227.9 827.9,236.3 826.5,241.2 C825.1,246.1 822.7,250.5 818.1,254.5 C813.5,258.5 806.5,262.8 798.9,265.3 C791.3,267.8 780.6,269.2 772.4,269.3 C764.2,269.4 753.4,266.3 749.6,265.7 L736.9,311.4 C739.4,312.2 747.5,313.6 752.0,316.0 C756.5,318.4 761.2,322.4 764.0,325.6 C766.8,328.8 767.9,332.9 768.8,335.2 C769.7,337.5 769.5,338.6 769.6,339.3 Z" fill="none" stroke="#0a1a2a" stroke-width="1"/>
<g fill="none" stroke="#0a1a2a" stroke-width="1">
<path d="M855.8,220.3 L871.9,282.1 L879.3,219.1"/>
<path d="M812.6,273.2 L1006.4,273.2 L994.1,269.1"/>
<path d="M882.2,297.2 L948.8,289.5 L1028.3,297.2 L948.8,304.9 Z"/>
<circle cx="882.2" cy="297.2" r="3"/><circle cx="948.8" cy="289.5" r="3"/><circle cx="1028.3" cy="297.2" r="3"/><circle cx="948.8" cy="304.9" r="3"/>
</g>
<g fill="#000"><circle cx="766.9" cy="345.3" r="1.7"/><circle cx="769.6" cy="339.3" r="1.7"/><circle cx="826.5" cy="339.3" r="1.7"/><circle cx="826.5" cy="345.3" r="1.7"/><circle cx="948.9" cy="339.5" r="1.7"/><circle cx="948.9" cy="345.8" r="1.7"/><circle cx="1082.5" cy="339.5" r="1.7"/><circle cx="1097.6" cy="345.8" r="1.7"/><circle cx="1067.9" cy="201.1" r="1.7"/><circle cx="1053.2" cy="208.3" r="1.7"/><circle cx="948.8" cy="215.3" r="1.7"/><circle cx="948.8" cy="221.8" r="1.7"/><circle cx="880.5" cy="212.4" r="1.7"/><circle cx="866.8" cy="209.3" r="1.7"/><circle cx="854.1" cy="214.8" r="1.7"/><circle cx="879.3" cy="219.1" r="1.7"/><circle cx="867.3" cy="216.0" r="1.7"/><circle cx="855.8" cy="220.3" r="1.7"/><circle cx="819.8" cy="220.3" r="1.7"/><circle cx="826.5" cy="225.2" r="1.7"/><circle cx="744.8" cy="258.8" r="1.7"/><circle cx="749.6" cy="265.7" r="1.7"/><circle cx="729.7" cy="312.6" r="1.7"/><circle cx="736.9" cy="311.4" r="1.7"/><circle cx="871.9" cy="282.1" r="1.7"/><circle cx="882.2" cy="297.2" r="1.7"/><circle cx="948.8" cy="289.5" r="1.7"/><circle cx="1028.3" cy="297.2" r="1.7"/><circle cx="948.8" cy="304.9" r="1.7"/></g>
<path d="M816.9,346.8 L1009.7,374.8 C1010.0,379.8 1011.4,395.1 1011.5,405.0 C1011.6,414.9 1010.6,424.3 1010.3,434.0 C1010.0,443.7 1009.8,453.3 1009.8,463.0 C1009.8,472.7 1010.2,487.2 1010.3,492.0 L816.9,521.0 C815.1,518.7 810.7,512.0 806.1,507.3 C801.5,502.6 796.1,497.5 789.3,492.9 C782.5,488.3 773.2,484.9 765.2,479.7 C757.2,474.5 747.0,467.6 741.2,461.7 C735.4,455.8 732.3,449.1 730.4,444.4 C728.5,439.7 729.7,437.2 729.7,433.3 C729.7,429.4 728.9,425.3 730.4,420.8 C731.9,416.3 735.0,411.2 738.8,406.4 C742.6,401.6 748.7,396.0 753.2,392.0 C757.7,388.0 760.0,385.6 766.0,382.4 C772.0,379.1 782.6,375.9 789.3,372.5 C796.0,369.1 801.5,366.0 806.1,361.7 C810.7,357.4 815.1,349.3 816.9,346.8 Z" fill="#99ccff" stroke="#0a1a2a" stroke-width="1"/>
<path d="M820.0,353.3 L1004.0,380.4 C1004.2,384.5 1005.5,396.2 1005.5,405.0 C1005.5,413.8 1004.3,424.2 1004.0,433.4 C1003.7,442.6 1003.5,451.1 1003.5,460.0 C1003.5,468.9 1003.9,482.2 1004.0,486.6 L820.0,513.5 C818.5,511.7 815.2,506.5 810.9,502.5 C806.6,498.5 800.9,493.9 794.1,489.3 C787.3,484.7 778.0,480.1 770.0,474.9 C762.0,469.7 751.5,463.5 746.0,458.1 C740.5,452.7 738.6,446.5 736.9,442.4 C735.2,438.3 735.9,436.9 735.9,433.3 C735.9,429.7 735.4,425.2 736.8,421.0 C738.2,416.8 741.1,412.2 744.5,408.0 C747.9,403.8 753.0,399.3 757.0,396.0 C761.0,392.7 763.0,391.4 768.8,388.3 C774.6,385.2 784.7,381.1 791.7,377.3 C798.7,373.5 806.2,369.3 810.9,365.3 C815.6,361.3 818.5,355.3 820.0,353.3 Z" fill="none" stroke="#0a1a2a" stroke-width="1"/>
<path d="M789.3,433 L949.8,433 L937.8,428.3" fill="none" stroke="#0a1a2a"/>
<g fill="#000"><circle cx="816.9" cy="346.8" r="1.7"/><circle cx="820.0" cy="353.3" r="1.7"/><circle cx="1009.7" cy="374.8" r="1.7"/><circle cx="1004.0" cy="380.4" r="1.7"/><circle cx="1010.3" cy="434.0" r="1.7"/><circle cx="1004.0" cy="433.4" r="1.7"/><circle cx="1010.3" cy="492.0" r="1.7"/><circle cx="1004.0" cy="486.6" r="1.7"/><circle cx="816.9" cy="521.0" r="1.7"/><circle cx="820.0" cy="513.5" r="1.7"/><circle cx="729.7" cy="433.3" r="1.7"/><circle cx="735.9" cy="433.3" r="1.7"/><circle cx="730.4" cy="444.4" r="1.7"/><circle cx="736.9" cy="442.4" r="1.7"/><circle cx="766.0" cy="382.4" r="1.7"/><circle cx="768.8" cy="388.3" r="1.7"/></g>
<rect x="1098.5" y="201.2" width="74.9" height="105.8" fill="#99ccff" stroke="#0a1a2a"/>
<rect x="1104.8" y="207.1" width="62.5" height="94.3" fill="none" stroke="#0a1a2a"/>
<path d="M1135.8,201.2 V307 M1110.4,254.1 H1129.5 L1126,252.6" fill="none" stroke="#0a1a2a"/>
<g fill="#000"><circle cx="1098.5" cy="201.2" r="1.7"/><circle cx="1173.4" cy="201.2" r="1.7"/><circle cx="1098.5" cy="307.0" r="1.7"/><circle cx="1173.4" cy="307.0" r="1.7"/><circle cx="1104.8" cy="207.1" r="1.7"/><circle cx="1167.3" cy="207.1" r="1.7"/><circle cx="1104.8" cy="301.4" r="1.7"/><circle cx="1167.3" cy="301.4" r="1.7"/><circle cx="1135.8" cy="201.2" r="1.7"/><circle cx="1135.8" cy="207.1" r="1.7"/><circle cx="1135.8" cy="301.4" r="1.7"/><circle cx="1135.8" cy="307.0" r="1.7"/></g>
<path d="M1098.1,318.9 C1099.1,321.8 1102.2,329.2 1104.4,336.0 C1106.7,342.8 1109.5,351.7 1111.6,359.5 C1113.7,367.3 1115.7,376.3 1117.0,382.9 C1118.3,389.5 1119.4,393.4 1119.7,399.1 C1120.0,404.8 1119.3,410.8 1118.8,417.1 C1118.3,423.4 1118.0,429.2 1116.9,437.0 C1115.8,444.8 1114.4,455.1 1112.4,464.1 C1110.5,473.1 1107.5,482.6 1105.2,491.1 C1102.9,499.7 1099.7,511.3 1098.6,515.4 L1132.6,525.7 C1132.8,519.9 1133.0,501.4 1133.7,491.1 C1134.4,480.8 1135.7,473.1 1136.8,464.1 C1137.9,455.1 1139.7,444.8 1140.4,437.0 C1141.1,429.2 1141.2,424.0 1141.2,417.1 C1141.2,410.2 1141.1,403.0 1140.5,395.5 C1139.9,388.0 1138.8,380.2 1137.7,372.1 C1136.6,364.0 1135.0,354.3 1134.1,346.8 C1133.2,339.3 1132.4,333.4 1132.3,327.0 C1132.2,320.6 1133.0,311.2 1133.2,308.1 Z" fill="#99ccff" stroke="#0a1a2a"/>
<path d="M1101.8,321.0 C1102.8,323.7 1105.6,330.5 1107.8,337.0 C1110.0,343.5 1112.7,352.3 1114.8,360.0 C1116.9,367.7 1118.8,376.7 1120.2,383.2 C1121.6,389.7 1122.6,393.5 1122.9,399.1 C1123.2,404.8 1122.5,410.8 1122.0,417.1 C1121.5,423.4 1121.1,429.2 1120.0,437.0 C1118.9,444.8 1117.4,455.1 1115.5,464.1 C1113.6,473.1 1111.0,482.9 1108.8,491.1 C1106.6,499.4 1103.5,509.9 1102.5,513.6 L1129.0,522.1 C1129.2,516.9 1129.7,500.8 1130.5,491.1 C1131.3,481.4 1132.6,473.1 1133.7,464.1 C1134.8,455.1 1136.6,444.8 1137.3,437.0 C1138.0,429.2 1137.7,424.0 1137.7,417.1 C1137.7,410.2 1137.7,402.7 1137.2,395.5 C1136.8,388.3 1136.0,381.4 1135.0,373.9 C1134.0,366.4 1132.4,358.0 1131.4,350.5 C1130.5,343.0 1129.7,335.1 1129.3,328.8 C1128.9,322.5 1129.3,315.3 1129.3,312.6 Z" fill="none" stroke="#0a1a2a"/>
<path d="M1118.5,417.1 H1141.2 M1120,468.9 H1128.6" fill="none" stroke="#0a1a2a"/>
<g fill="#000"><circle cx="1098.1" cy="318.9" r="1.7"/><circle cx="1133.2" cy="308.1" r="1.7"/><circle cx="1135.6" cy="307.2" r="1.7"/><circle cx="1129.3" cy="312.6" r="1.7"/><circle cx="1118.8" cy="417.1" r="1.7"/><circle cx="1122.0" cy="417.1" r="1.7"/><circle cx="1137.7" cy="417.1" r="1.7"/><circle cx="1141.2" cy="417.1" r="1.7"/><circle cx="1098.6" cy="515.4" r="1.7"/><circle cx="1102.5" cy="513.6" r="1.7"/><circle cx="1132.6" cy="525.7" r="1.7"/><circle cx="1129.0" cy="522.1" r="1.7"/></g>
<path d="M1174.5,212.5 C1175.1,215.4 1177.0,221.4 1177.9,230.0 C1178.9,238.6 1179.9,250.7 1180.2,263.8 C1180.5,276.9 1179.7,296.8 1179.7,308.8 C1179.7,320.8 1180.2,326.9 1180.1,336.0 C1180.0,345.1 1179.8,354.7 1179.2,363.1 C1178.6,371.5 1177.3,379.3 1176.5,386.5 C1175.7,393.7 1174.7,403.0 1174.3,406.3 C1175.0,407.5 1175.3,411.6 1178.3,413.5 C1181.3,415.4 1190.0,417.2 1192.3,418.0 C1192.7,415.1 1193.7,408.5 1194.5,400.9 C1195.3,393.2 1196.6,379.8 1197.2,372.1 C1197.8,364.5 1197.8,361.0 1198.1,355.0 C1198.4,349.0 1198.8,343.7 1199.0,336.0 C1199.2,328.3 1199.4,320.8 1199.3,308.8 C1199.2,296.8 1198.8,276.9 1198.2,263.8 C1197.6,250.7 1196.7,238.6 1195.9,230.0 C1195.2,221.4 1194.4,216.8 1193.7,212.0 C1193.0,207.2 1192.2,203.0 1191.9,201.2 C1190.6,201.4 1186.6,201.5 1184.3,202.2 C1182.0,202.9 1179.6,203.6 1178.0,205.3 C1176.4,207.0 1175.1,211.3 1174.5,212.5 Z" fill="#99ccff" stroke="#0a1a2a"/>
<path d="M1178.4,212.5 C1178.9,215.4 1180.5,221.4 1181.3,230.0 C1182.1,238.6 1183.1,250.7 1183.5,263.8 C1183.9,276.9 1183.5,296.8 1183.5,308.8 C1183.5,320.8 1183.6,326.9 1183.4,336.0 C1183.2,345.1 1183.0,354.7 1182.4,363.1 C1181.8,371.5 1180.7,379.4 1179.9,386.5 C1179.1,393.6 1178.2,402.3 1177.8,405.5 C1178.4,406.4 1179.6,409.7 1181.5,411.0 C1183.4,412.3 1187.8,413.1 1189.1,413.5 C1189.4,411.6 1190.2,408.7 1190.9,401.8 C1191.7,394.9 1193.0,379.9 1193.6,372.1 C1194.2,364.3 1194.2,361.0 1194.5,355.0 C1194.8,349.0 1195.2,343.7 1195.4,336.0 C1195.6,328.3 1195.6,320.8 1195.5,308.8 C1195.4,296.8 1195.3,276.9 1194.8,263.8 C1194.3,250.7 1193.2,238.6 1192.5,230.0 C1191.8,221.4 1191.2,216.3 1190.7,212.0 C1190.2,207.7 1189.5,205.4 1189.2,204.1 C1188.4,204.2 1186.0,204.4 1184.5,205.0 C1183.0,205.6 1181.5,206.3 1180.5,207.6 C1179.5,208.8 1178.8,211.7 1178.4,212.5 Z" fill="none" stroke="#0a1a2a"/>
<path d="M1179.7,309 H1199.3 M1184.6,361.3 H1191.3 M1174.5,211.8 H1192.6 M1183.2,208.5 V215.7 M1183.4,403.8 V410 M1174.6,406.4 H1190" fill="none" stroke="#0a1a2a"/>
<g fill="#000"><circle cx="1174.5" cy="212.5" r="1.7"/><circle cx="1178.4" cy="212.5" r="1.7"/><circle cx="1191.9" cy="201.2" r="1.7"/><circle cx="1189.2" cy="204.6" r="1.7"/><circle cx="1190.5" cy="211.0" r="1.7"/><circle cx="1193.7" cy="211.0" r="1.7"/><circle cx="1191.0" cy="217.5" r="1.7"/><circle cx="1194.3" cy="217.5" r="1.7"/><circle cx="1194.8" cy="263.8" r="1.7"/><circle cx="1198.2" cy="263.8" r="1.7"/><circle cx="1179.7" cy="309.0" r="1.7"/><circle cx="1183.5" cy="309.0" r="1.7"/><circle cx="1195.5" cy="309.0" r="1.7"/><circle cx="1199.3" cy="309.0" r="1.7"/><circle cx="1194.5" cy="354.6" r="1.7"/><circle cx="1198.1" cy="354.6" r="1.7"/><circle cx="1190.0" cy="401.8" r="1.7"/><circle cx="1193.6" cy="401.8" r="1.7"/><circle cx="1190.0" cy="408.1" r="1.7"/><circle cx="1193.6" cy="408.1" r="1.7"/><circle cx="1174.3" cy="406.3" r="1.7"/><circle cx="1177.8" cy="405.5" r="1.7"/><circle cx="1192.3" cy="418.0" r="1.7"/><circle cx="1189.1" cy="413.5" r="1.7"/></g>
<rect x="720.5" y="192.5" width="386" height="162" fill="none" stroke="#555" stroke-width="1" stroke-dasharray="2,2"/>
<rect x="719.0" y="191.0" width="3" height="3" fill="#aaa" stroke="#555" stroke-width="0.7"/><rect x="912.0" y="191.0" width="3" height="3" fill="#aaa" stroke="#555" stroke-width="0.7"/><rect x="1105.0" y="191.0" width="3" height="3" fill="#aaa" stroke="#555" stroke-width="0.7"/><rect x="719.0" y="353.0" width="3" height="3" fill="#aaa" stroke="#555" stroke-width="0.7"/><rect x="912.0" y="353.0" width="3" height="3" fill="#aaa" stroke="#555" stroke-width="0.7"/><rect x="1105.0" y="353.0" width="3" height="3" fill="#aaa" stroke="#555" stroke-width="0.7"/><rect x="719.0" y="272.0" width="3" height="3" fill="#aaa" stroke="#555" stroke-width="0.7"/><rect x="1105.0" y="272.0" width="3" height="3" fill="#aaa" stroke="#555" stroke-width="0.7"/>
<text x="1037" y="333" font-family="Liberation Sans, sans-serif" font-weight="bold" font-size="22" fill="#800a0c" textLength="166" lengthAdjust="spacingAndGlyphs">CrkDongle.com</text>
<rect x="315" y="64" width="899.3" height="10" fill="#535558"/>
<rect x="315" y="64" width="10.8" height="569.3" fill="#535558"/>
<path d="M325.0,68.2 V74 M331.3,72 V74 M337.5,71 V74 M343.8,72 V74 M350.0,68.2 V74 M356.2,72 V74 M362.5,71 V74 M368.7,72 V74 M375.0,68.2 V74 M381.2,72 V74 M387.5,71 V74 M393.7,72 V74 M400.0,68.2 V74 M406.2,72 V74 M412.4,71 V74 M418.7,72 V74 M424.9,68.2 V74 M431.2,72 V74 M437.4,71 V74 M443.7,72 V74 M449.9,68.2 V74 M456.2,72 V74 M462.4,71 V74 M468.7,72 V74 M474.9,68.2 V74 M481.1,72 V74 M487.4,71 V74 M493.6,72 V74 M499.9,68.2 V74 M506.1,72 V74 M512.4,71 V74 M518.6,72 V74 M524.9,68.2 V74 M531.1,72 V74 M537.4,71 V74 M543.6,72 V74 M549.8,68.2 V74 M556.1,72 V74 M562.3,71 V74 M568.6,72 V74 M574.8,68.2 V74 M581.1,72 V74 M587.3,71 V74 M593.6,72 V74 M599.8,68.2 V74 M606.0,72 V74 M612.3,71 V74 M618.5,72 V74 M624.8,68.2 V74 M631.0,72 V74 M637.3,71 V74 M643.5,72 V74 M649.8,68.2 V74 M656.0,72 V74 M662.2,71 V74 M668.5,72 V74 M674.7,68.2 V74 M681.0,72 V74 M687.2,71 V74 M693.5,72 V74 M699.7,68.2 V74 M706.0,72 V74 M712.2,71 V74 M718.5,72 V74 M724.7,68.2 V74 M730.9,72 V74 M737.2,71 V74 M743.4,72 V74 M749.7,68.2 V74 M755.9,72 V74 M762.2,71 V74 M768.4,72 V74 M774.7,68.2 V74 M780.9,72 V74 M787.2,71 V74 M793.4,72 V74 M799.6,68.2 V74 M805.9,72 V74 M812.1,71 V74 M818.4,72 V74 M824.6,68.2 V74 M830.9,72 V74 M837.1,71 V74 M843.4,72 V74 M849.6,68.2 V74 M855.8,72 V74 M862.1,71 V74 M868.3,72 V74 M874.6,68.2 V74 M880.8,72 V74 M887.1,71 V74 M893.3,72 V74 M899.6,68.2 V74 M905.8,72 V74 M912.0,71 V74 M918.3,72 V74 M924.5,68.2 V74 M930.8,72 V74 M937.0,71 V74 M943.3,72 V74 M949.5,68.2 V74 M955.8,72 V74 M962.0,71 V74 M968.3,72 V74 M974.5,68.2 V74 M980.7,72 V74 M987.0,71 V74 M993.2,72 V74 M999.5,68.2 V74 M1005.7,72 V74 M1012.0,71 V74 M1018.2,72 V74 M1024.5,68.2 V74 M1030.7,72 V74 M1037.0,71 V74 M1043.2,72 V74 M1049.4,68.2 V74 M1055.7,72 V74 M1061.9,71 V74 M1068.2,72 V74 M1074.4,68.2 V74 M1080.7,72 V74 M1086.9,71 V74 M1093.2,72 V74 M1099.4,68.2 V74 M1105.6,72 V74 M1111.9,71 V74 M1118.1,72 V74 M1124.4,68.2 V74 M1130.6,72 V74 M1136.9,71 V74 M1143.1,72 V74 M1149.4,68.2 V74 M1155.6,72 V74 M1161.8,71 V74 M1168.1,72 V74 M1174.3,68.2 V74 M1180.6,72 V74 M1186.8,71 V74 M1193.1,72 V74 M1199.3,68.2 V74 M1205.6,72 V74 M1211.8,71 V74 M319.8,75.3 H326 M324,81.6 H326 M323,87.8 H326 M324,94.1 H326 M319.8,100.3 H326 M324,106.6 H326 M323,112.8 H326 M324,119.1 H326 M319.8,125.3 H326 M324,131.6 H326 M323,137.8 H326 M324,144.1 H326 M319.8,150.3 H326 M324,156.6 H326 M323,162.9 H326 M324,169.1 H326 M319.8,175.4 H326 M324,181.6 H326 M323,187.9 H326 M324,194.1 H326 M319.8,200.4 H326 M324,206.6 H326 M323,212.9 H326 M324,219.1 H326 M319.8,225.4 H326 M324,231.6 H326 M323,237.9 H326 M324,244.2 H326 M319.8,250.4 H326 M324,256.7 H326 M323,262.9 H326 M324,269.2 H326 M319.8,275.4 H326 M324,281.7 H326 M323,287.9 H326 M324,294.2 H326 M319.8,300.4 H326 M324,306.7 H326 M323,313.0 H326 M324,319.2 H326 M319.8,325.5 H326 M324,331.7 H326 M323,338.0 H326 M324,344.2 H326 M319.8,350.5 H326 M324,356.7 H326 M323,363.0 H326 M324,369.2 H326 M319.8,375.5 H326 M324,381.7 H326 M323,388.0 H326 M324,394.3 H326 M319.8,400.5 H326 M324,406.8 H326 M323,413.0 H326 M324,419.3 H326 M319.8,425.5 H326 M324,431.8 H326 M323,438.0 H326 M324,444.3 H326 M319.8,450.5 H326 M324,456.8 H326 M323,463.0 H326 M324,469.3 H326 M319.8,475.6 H326 M324,481.8 H326 M323,488.1 H326 M324,494.3 H326 M319.8,500.6 H326 M324,506.8 H326 M323,513.1 H326 M324,519.3 H326 M319.8,525.6 H326 M324,531.8 H326 M323,538.1 H326 M324,544.3 H326 M319.8,550.6 H326 M324,556.9 H326 M323,563.1 H326 M324,569.4 H326 M319.8,575.6 H326 M324,581.9 H326 M323,588.1 H326 M324,594.4 H326 M319.8,600.6 H326 M324,606.9 H326 M323,613.1 H326 M324,619.4 H326 M319.8,625.7 H326 M324,631.9 H326" stroke="#dcdcdc" stroke-width="0.9" fill="none"/>
<g font-family="Liberation Sans, sans-serif" font-size="6.8" fill="#e8e8e8"><text x="328.0" y="71.3">2</text><text x="351.7" y="71.3">0</text><text x="376.7" y="71.3">2</text><text x="401.7" y="71.3">4</text><text x="426.6" y="71.3">6</text><text x="451.6" y="71.3">8</text><text x="476.6" y="71.3">10</text><text x="501.6" y="71.3">12</text><text x="526.6" y="71.3">14</text><text x="551.5" y="71.3">16</text><text x="576.5" y="71.3">18</text><text x="601.5" y="71.3">20</text><text x="626.5" y="71.3">22</text><text x="651.5" y="71.3">24</text><text x="676.4" y="71.3">26</text><text x="701.4" y="71.3">28</text><text x="726.4" y="71.3">30</text><text x="751.4" y="71.3">32</text><text x="776.4" y="71.3">34</text><text x="801.3" y="71.3">36</text><text x="826.3" y="71.3">38</text><text x="851.3" y="71.3">40</text><text x="876.3" y="71.3">42</text><text x="901.3" y="71.3">44</text><text x="926.2" y="71.3">46</text><text x="951.2" y="71.3">48</text><text x="976.2" y="71.3">50</text><text x="1001.2" y="71.3">52</text><text x="1026.2" y="71.3">54</text><text x="1051.1" y="71.3">56</text><text x="1076.1" y="71.3">58</text><text x="1101.1" y="71.3">60</text><text x="1126.1" y="71.3">62</text><text x="1151.1" y="71.3">64</text><text x="1176.0" y="71.3">66</text><text x="1201.0" y="71.3">68</text><text transform="translate(322.4,99.1) rotate(-90)" x="0" y="0">38</text><text transform="translate(322.4,124.1) rotate(-90)" x="0" y="0">36</text><text transform="translate(322.4,149.1) rotate(-90)" x="0" y="0">34</text><text transform="translate(322.4,174.2) rotate(-90)" x="0" y="0">32</text><text transform="translate(322.4,199.2) rotate(-90)" x="0" y="0">30</text><text transform="translate(322.4,224.2) rotate(-90)" x="0" y="0">28</text><text transform="translate(322.4,249.2) rotate(-90)" x="0" y="0">26</text><text transform="translate(322.4,274.2) rotate(-90)" x="0" y="0">24</text><text transform="translate(322.4,299.2) rotate(-90)" x="0" y="0">22</text><text transform="translate(322.4,324.3) rotate(-90)" x="0" y="0">20</text><text transform="translate(322.4,349.3) rotate(-90)" x="0" y="0">18</text><text transform="translate(322.4,374.3) rotate(-90)" x="0" y="0">16</text><text transform="translate(322.4,399.3) rotate(-90)" x="0" y="0">14</text><text transform="translate(322.4,424.3) rotate(-90)" x="0" y="0">12</text><text transform="translate(322.4,449.3) rotate(-90)" x="0" y="0">10</text><text transform="translate(322.4,474.4) rotate(-90)" x="0" y="0">8</text><text transform="translate(322.4,499.4) rotate(-90)" x="0" y="0">6</text><text transform="translate(322.4,524.4) rotate(-90)" x="0" y="0">4</text><text transform="translate(322.4,549.4) rotate(-90)" x="0" y="0">2</text><text transform="translate(322.4,574.4) rotate(-90)" x="0" y="0">0</text><text transform="translate(322.4,599.4) rotate(-90)" x="0" y="0">2</text><text transform="translate(322.4,624.5) rotate(-90)" x="0" y="0">4</text></g>
</svg>
<div style="position:absolute;left:1214px;top:64px;width:14px;height:584px;background:#cdcdcd;"></div>
<div style="position:absolute;left:1215px;top:65px;width:12.4px;height:59px;background:#d4d4d4;border:0.6px solid #bdbdbd;"></div>
<div style="position:absolute;left:1216.8px;top:68.4px;width:10px;height:56px;writing-mode:vertical-rl;font-size:7.7px;line-height:10px;color:#6a6a6a;font-weight:bold;white-space:nowrap">PFA_Eva.mod</div>
<div style="position:absolute;left:1.5px;top:633px;width:1212.5px;height:15px;background:#c6c6c6;"></div>
<div style="position:absolute;left:17.5px;top:636px;width:45px;height:12px;background:#cfcfcf;border:0.6px solid #b2b2b2;"></div>
<div style="position:absolute;left:20.80px;top:636.00px;font-size:8.2px;line-height:11px;color:#666;white-space:nowrap;font-weight:bold;transform:scaleX(0.890);transform-origin:0 50%;">Map Zones</div>
<div style="position:absolute;left:63.2px;top:636px;width:64px;height:12px;background:#c9c9c9;border:0.6px solid #b2b2b2;"></div>
<div style="position:absolute;left:66.70px;top:636.00px;font-size:8.2px;line-height:11px;color:#808080;white-space:nowrap;transform:scaleX(0.925);transform-origin:0 50%;">Compare Length</div>
<div style="position:absolute;left:127.8px;top:636px;width:39px;height:12px;background:#c9c9c9;border:0.6px solid #b2b2b2;"></div>
<div style="position:absolute;left:131.50px;top:636.00px;font-size:8.2px;line-height:11px;color:#808080;white-space:nowrap;transform:scaleX(0.845);transform-origin:0 50%;">Style Sets</div>
<div style="position:absolute;left:1.6px;top:648.6px;width:1226.2px;height:15.4px;background:#dedede;"></div>
<div style="position:absolute;left:1.6px;top:648.6px;width:1226.2px;height:0.8px;background:#f4f4f4;"></div>
<div style="position:absolute;left:3.60px;top:652.00px;font-size:8.2px;line-height:11px;color:#111;white-space:nowrap;transform:scaleX(0.844);transform-origin:0 50%;">Ready</div>
<div style="position:absolute;left:894px;top:649.5px;width:1px;height:14px;background:#f6f6f6;"></div>
<div style="position:absolute;left:893.2px;top:649.5px;width:0.8px;height:14px;background:#bcbcbc;"></div>
<div style="position:absolute;left:926px;top:649.5px;width:1px;height:14px;background:#f6f6f6;"></div>
<div style="position:absolute;left:925.2px;top:649.5px;width:0.8px;height:14px;background:#bcbcbc;"></div>
<div style="position:absolute;left:961.6px;top:649.5px;width:1px;height:14px;background:#f6f6f6;"></div>
<div style="position:absolute;left:960.8px;top:649.5px;width:0.8px;height:14px;background:#bcbcbc;"></div>
<div style="position:absolute;left:1067.5px;top:649.5px;width:1px;height:14px;background:#f6f6f6;"></div>
<div style="position:absolute;left:1066.7px;top:649.5px;width:0.8px;height:14px;background:#bcbcbc;"></div>
<div style="position:absolute;left:1104.4px;top:649.5px;width:1px;height:14px;background:#f6f6f6;"></div>
<div style="position:absolute;left:1103.6px;top:649.5px;width:0.8px;height:14px;background:#bcbcbc;"></div>
<div style="position:absolute;left:1171px;top:649.5px;width:1px;height:14px;background:#f6f6f6;"></div>
<div style="position:absolute;left:1170.2px;top:649.5px;width:0.8px;height:14px;background:#bcbcbc;"></div>
<div style="position:absolute;left:1175.70px;top:651.00px;font-size:8.2px;line-height:11px;color:#111;white-space:nowrap;transform:scaleX(0.918);transform-origin:0 50%;">INCH - sq.feet</div>
<div style="position:absolute;left:825.6px;top:648.6px;width:16.4px;height:15.6px;background:#a8c8f8;"></div><svg style="position:absolute;left:825.6px;top:648.6px" width="16.4" height="15.6" viewBox="0 0 16.4 15.6"><circle cx="10.4" cy="12.8" r="5.6" fill="#a8e8b8"/><path d="M1.4,1.4 L7.4,8.6 M14.6,1 L8.4,8.4" stroke="#4a5ae8" stroke-width="0.9"/><path d="M14.6,1 L12.8,1.6 M1.6,13.6 L3.4,12" stroke="#e83a4a" stroke-width="1"/></svg><div style="position:absolute;left:842.6px;top:648.6px;width:16px;height:15.6px;background:#fff;"></div><svg style="position:absolute;left:842.6px;top:648.6px" width="16" height="15.6" viewBox="0 0 16 15.6"><path d="M6.6,2 V14 M1.4,8 H11.4 M9.6,2.8 V14.6 M4.6,10.6 H14" stroke="#111" stroke-width="0.9"/><path d="M6.6,1.4 L5.4,3.2 H7.8 Z M1,8 L2.8,6.8 V9.2 Z" fill="#111"/></svg><div style="position:absolute;left:859.4px;top:648.6px;width:16px;height:15.6px;background:#a8c8f8;"></div><svg style="position:absolute;left:859.4px;top:648.6px" width="16" height="15.6" viewBox="0 0 16 15.6"><path d="M2,2 C6,4 6,12 2,14.4 M13.6,2 C9,5 9,11 13.6,14.4" fill="none" stroke="#3a4ae8" stroke-width="0.9" stroke-dasharray="1.6,1"/><path d="M2,2 L4,2.2 M13.6,2 L11.6,2.2" stroke="#e83a4a" stroke-width="1.1"/><circle cx="12.6" cy="11" r="3.4" fill="#b8d8ff"/></svg><div style="position:absolute;left:876.2px;top:648.6px;width:16.4px;height:15.6px;background:#e4e4e4;"></div><svg style="position:absolute;left:876.2px;top:648.6px" width="16.4" height="15.6" viewBox="0 0 16.4 15.6"><circle cx="7.6" cy="8.6" r="5.2" fill="#d4d4d4" stroke="#222" stroke-width="0.9"/><path d="M1,15 L14.6,1.4" stroke="#222" stroke-width="0.8"/><text x="8.4" y="15.2" font-family="Liberation Serif, serif" font-weight="bold" font-size="8.6" fill="#000">D</text></svg>
</div></body></html>
